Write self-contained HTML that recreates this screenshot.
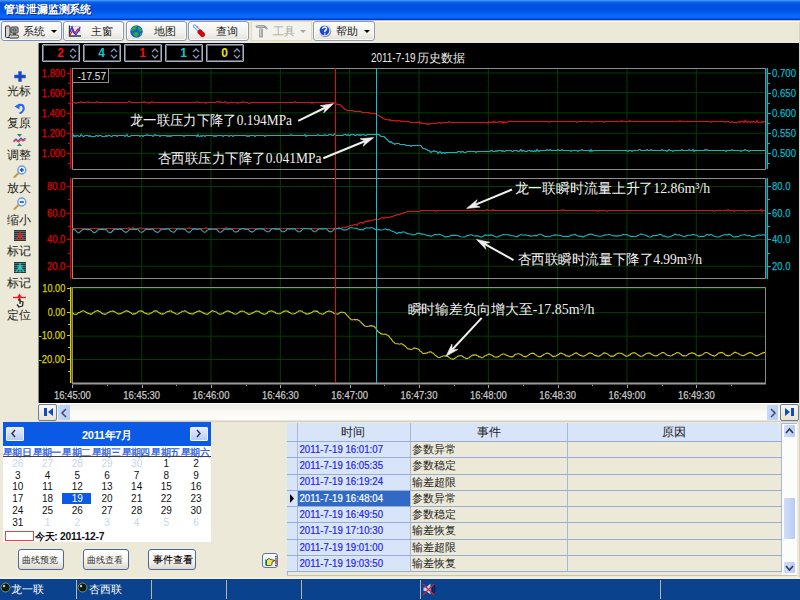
<!DOCTYPE html><html><head><meta charset="utf-8"><style>
body{margin:0;width:800px;height:600px;overflow:hidden;position:relative;background:#ECE9D8;font-family:"Liberation Sans",sans-serif;font-size:12px;color:#000}
.a{position:absolute}
.btn{position:absolute;top:21px;height:18px;border:1px solid #8a9ab8;border-radius:3px;background:linear-gradient(#fcfcfb,#f3f2ee 60%,#e4e1d6);box-shadow:inset 0 0 0 1px #fbfbf8}
.bt{position:absolute;top:3px;font-size:11px;line-height:12px;color:#222;white-space:nowrap}
.lp{position:absolute;left:0;width:38px;text-align:center;font-size:11.5px;line-height:12px;color:#222}
.spin{position:absolute;top:44px;width:36px;height:16px;border:1px solid #a8b0c0;border-radius:1px;background:#000;box-shadow:inset 0 0 0 1px #5a6270}
.spin span{position:absolute;right:15px;top:2px;font-weight:bold;font-size:12px;line-height:13px}
.cal{position:absolute;font-size:12px;line-height:12px;text-align:center;width:30px}
.tr{position:absolute;left:297px;width:485px;height:16px}
</style></head><body>
<!-- title bar -->
<div class="a" style="left:0;top:0;width:800px;height:20px;background:linear-gradient(#5aaaff 0,#2a7af8 1px,#0660e8 2.5px,#0052de 5px,#0050dc 9px,#0058f0 12px,#0a68ff 16px,#0a66fa 18px,#0040d0 19px,#0034b8 20px)"></div>
<div class="a" style="left:5px;top:4px;font-size:11px;line-height:12px;font-weight:bold;color:#0a2a80;letter-spacing:-0.1px;white-space:nowrap">管道泄漏监测系统</div>
<div class="a" style="left:4px;top:3px;font-size:11px;line-height:12px;font-weight:bold;color:#fff;letter-spacing:-0.1px;white-space:nowrap">管道泄漏监测系统</div>
<div class="a" style="left:0;top:20px;width:800px;height:1px;background:#b8c0d0"></div><div class="a" style="left:0;top:21px;width:800px;height:1px;background:#fff8dc"></div>

<!-- toolbar buttons -->
<div class="btn" style="left:1px;width:59px;border-color:#7892c8"></div>
<svg class="a" style="left:4px;top:25px" width="15" height="14" viewBox="0 0 15 14">
 <rect x="1.5" y="1" width="4.5" height="11.5" rx="1" fill="#d8d8d8" stroke="#333" stroke-width="1"/>
 <rect x="2.5" y="2" width="2" height="2" fill="#f0b0c0"/>
 <rect x="7" y="2" width="7" height="6" rx="1" fill="#bbb" stroke="#333" stroke-width="1"/>
 <rect x="8.5" y="3.5" width="4" height="3" fill="#7a2a9a"/><path d="M10.5,3.5 V6.5" stroke="#2c2" stroke-width="1.5"/>
 <path d="M9,9 H12" stroke="#222" stroke-width="1.2"/>
 <rect x="5" y="10" width="9.5" height="3" rx="1.2" fill="#ddd" stroke="#333" stroke-width="1"/>
</svg>
<div class="bt" style="left:23px;top:24.5px">系统</div>
<div class="a" style="left:51px;top:30px;width:0;height:0;border-left:3px solid transparent;border-right:3px solid transparent;border-top:3px solid #000"></div>

<div class="btn" style="left:63px;width:59px"></div>
<svg class="a" style="left:68px;top:25px" width="13" height="12" viewBox="0 0 13 12">
 <path d="M2,1.5 H13 M2,4 H13 M2,7 H13" stroke="#c8c8c8" stroke-width="1"/>
 <path d="M1.5,0.5 V11 H13" stroke="#333" stroke-width="1.3" fill="none"/>
 <path d="M2,10 L5,5 L7,8 L10,4 L12,6" stroke="#e82020" stroke-width="1.3" fill="none"/>
 <path d="M2,7 L4,2 L6,8 L8,9.5 L11,5 L12,2" stroke="#3030e0" stroke-width="1.3" fill="none"/>
</svg>
<div class="bt" style="left:91px;top:24.5px">主窗</div>

<div class="btn" style="left:126px;width:59px"></div>
<svg class="a" style="left:130px;top:25px" width="13" height="13" viewBox="0 0 13 13">
 <circle cx="6.5" cy="6.5" r="6.2" fill="#1a5ad8"/>
 <path d="M2,3 Q4,0.5 7,1 L6,4 L3,6 L1,5Z M8,1.5 Q11,2 12,5 L10,7 L8,4Z M4,7.5 L7,7 L9,9 L7,12 Q4,11.5 3,9Z M10,8.5 L12,8 Q11.5,10.5 10,11Z" fill="#28b030"/>
</svg>
<div class="bt" style="left:154px;top:24.5px">地图</div>

<div class="btn" style="left:188px;width:59px"></div>
<svg class="a" style="left:192px;top:24px" width="14" height="14" viewBox="0 0 14 14">
 <path d="M2.5,2 L8,7.5" stroke="#6aaaf0" stroke-width="3.2" stroke-linecap="round"/>
 <path d="M2.5,2 L8,7.5" stroke="#f4f8ff" stroke-width="1.2" stroke-linecap="round"/>
 <path d="M5,2.5 L6,3.5" stroke="#e44" stroke-width="1.2"/>
 <path d="M8,8 L10.5,10.5" stroke="#d00808" stroke-width="5" stroke-linecap="round"/>
</svg>
<div class="bt" style="left:216px;top:24.5px">查询</div>

<div class="a" style="left:251px;top:21px;width:59px;height:18px;border:1px solid #e4dcb8;background:#f3f2ec"></div>
<svg class="a" style="left:254px;top:24px" width="15" height="15" viewBox="0 0 15 15">
 <path d="M1.5,2 Q3,1 5,1 H10 Q12,1.5 14,5 L12.5,5.5 L10.5,4 H2.5 Z" fill="#9a9a9a"/>
 <path d="M3,2.3 H10" stroke="#d8d8d8" stroke-width=".8"/>
 <rect x="5" y="4.5" width="4" height="9" fill="#a8a8a8"/><path d="M6.5,5 V12" stroke="#e0e0e0" stroke-width=".8"/>
</svg>
<div class="bt" style="left:273px;top:24.5px;color:#aca899">工具</div>
<div class="a" style="left:300px;top:30px;width:0;height:0;border-left:3px solid transparent;border-right:3px solid transparent;border-top:3px solid #aca899"></div>

<div class="btn" style="left:313px;width:60px"></div>
<svg class="a" style="left:318px;top:24px" width="14" height="14" viewBox="0 0 14 14">
 <circle cx="7.2" cy="7.3" r="6" fill="#555" opacity=".6"/>
 <circle cx="6.5" cy="6.5" r="5.8" fill="#e8eef8"/>
 <circle cx="6.5" cy="6.5" r="4.8" fill="#1c48d0"/>
 <path d="M4.6,5 Q4.8,3 6.6,3 Q8.6,3 8.5,4.9 Q8.4,6.2 6.8,7 V8.3" stroke="#fff" stroke-width="1.4" fill="none"/>
 <circle cx="6.8" cy="10" r=".8" fill="#fff"/>
</svg>
<div class="bt" style="left:336px;top:24.5px">帮助</div>
<div class="a" style="left:364px;top:30px;width:0;height:0;border-left:3px solid transparent;border-right:3px solid transparent;border-top:3px solid #000"></div>

<!-- left panel -->
<svg class="a" style="left:14px;top:71px" width="12" height="11" viewBox="0 0 12 11"><path d="M4.5,0.5 H7.5 V4 H11.5 V7 H7.5 V10.5 H4.5 V7 H0.5 V4 H4.5Z" fill="#1848c0" stroke="#3a68d8" stroke-width=".6" stroke-linejoin="round"/></svg>
<div class="lp" style="top:85px">光标</div>
<svg class="a" style="left:14px;top:103px" width="11" height="11" viewBox="0 0 11 11"><path d="M4,3 Q6,1.5 8,2 Q10.2,3.2 9.5,6.5 Q8.5,9.5 6.5,10" stroke="#2a6ae8" stroke-width="2.2" fill="none" stroke-linecap="round"/><path d="M0.5,3.5 L5.5,0.5 L5.5,6.5Z" fill="#2a6ae8"/></svg>
<div class="lp" style="top:117px">复原</div>
<svg class="a" style="left:13px;top:134px" width="13" height="12" viewBox="0 0 13 12"><path d="M4,0 H9 L6.5,3Z M4,12 H9 L6.5,9Z" fill="#1a8a7a"/><path d="M0.5,7 L3,5 L5,7 L8,4 L10,6 L12.5,4" stroke="#3a5ae8" stroke-width="1.1" fill="none"/><path d="M0.5,8 L3,6 L5.5,8 L8,5.5 L10,7 L12.5,5.5" stroke="#e84040" stroke-width="1.1" fill="none"/></svg>
<div class="lp" style="top:149px">调整</div>
<svg class="a" style="left:13px;top:165px" width="14" height="13" viewBox="0 0 14 13"><path d="M1.5,12 L5.5,8" stroke="#d09a30" stroke-width="2" stroke-linecap="round"/><circle cx="8.8" cy="5" r="4" fill="#e8f4ff" stroke="#6a9ae8" stroke-width="1.4"/><path d="M6.8,5 H10.8 M8.8,3 V7" stroke="#1a4ac8" stroke-width="1.4"/></svg>
<div class="lp" style="top:182px">放大</div>
<svg class="a" style="left:13px;top:197px" width="14" height="13" viewBox="0 0 14 13"><path d="M1.5,12 L5.5,8" stroke="#d09a30" stroke-width="2" stroke-linecap="round"/><circle cx="8.8" cy="5" r="4" fill="#e8f4ff" stroke="#6a9ae8" stroke-width="1.4"/><path d="M6.8,5 H10.8" stroke="#1a4ac8" stroke-width="1.6"/></svg>
<div class="lp" style="top:214px">缩小</div>
<svg class="a" style="left:14px;top:230px" width="12" height="11" viewBox="0 0 12 11"><rect width="12" height="11" fill="#203838"/><path d="M0,1.5 H12 M0,3.5 H12 M0,5.5 H12 M0,7.5 H12 M0,9.5 H12" stroke="#6a8a8a" stroke-width=".7"/><path d="M6,1 V10.5 M3,4 H9 M6,4.5 L2,10 M6,4.5 L10,10" stroke="#f02020" stroke-width="1.2"/></svg>
<div class="lp" style="top:245px">标记</div>
<svg class="a" style="left:14px;top:262px" width="12" height="11" viewBox="0 0 12 11"><rect width="12" height="11" fill="#203838"/><path d="M0,1.5 H12 M0,3.5 H12 M0,5.5 H12 M0,7.5 H12 M0,9.5 H12" stroke="#6a8a8a" stroke-width=".7"/><path d="M6,1 V10.5 M3,4 H9 M6,4.5 L2,10 M6,4.5 L10,10" stroke="#20e0e0" stroke-width="1.2"/></svg>
<div class="lp" style="top:277px">标记</div>
<svg class="a" style="left:12px;top:293px" width="15" height="15" viewBox="0 0 15 15"><path d="M1,4.5 H14" stroke="#f01818" stroke-width="1.3"/><path d="M7.5,0.5 L10,4.5 L7.5,6 L5,4.5Z" fill="#f01818"/><path d="M6,7 L8,6.5 V11 M8,8 L11,9 L10.5,13 L7,14 L5,11.5" stroke="#222" stroke-width="1.3" fill="#eee" stroke-linejoin="round"/></svg>
<div class="lp" style="top:309px">定位</div>

<!-- black chart area -->
<div class="a" style="left:38px;top:43px;width:762px;height:360px;background:#000;border-left:1px solid #8a8a8a;box-sizing:border-box"></div>

<!-- spin boxes -->
<div class="spin" style="left:42px"><span style="color:#f01010">2</span></div>
<div class="spin" style="left:83px"><span style="color:#10c8d0">4</span></div>
<div class="spin" style="left:124px"><span style="color:#f01010">1</span></div>
<div class="spin" style="left:165px"><span style="color:#10c8d0">1</span></div>
<div class="spin" style="left:206px"><span style="color:#e8e020">0</span></div>
<svg class="a" style="left:0;top:0" width="800" height="600">
 <g stroke="#8090b8" stroke-width="1.3" fill="none">
  <path d="M70,52 L73,49 L76,52 M70,55 L73,58 L76,55"/>
<path d="M111,52 L114,49 L117,52 M111,55 L114,58 L117,55"/>
<path d="M152,52 L155,49 L158,52 M152,55 L155,58 L158,55"/>
<path d="M193,52 L196,49 L199,52 M193,55 L196,58 L199,55"/>
<path d="M234,52 L237,49 L240,52 M234,55 L237,58 L240,55"/>
 </g>
</svg>

<svg class="a" style="left:0;top:0" width="800" height="600" font-family="Liberation Sans">
 <!-- title -->
 <text x="371" y="61.6" font-size="12" fill="#e8e8e8" textLength="44.5" lengthAdjust="spacingAndGlyphs">2011-7-19</text><text x="416.5" y="61.6" font-size="12" fill="#e8e8e8" textLength="48.5" lengthAdjust="spacingAndGlyphs">历史数据</text>
 <!-- grids -->
 <g stroke="#003e00" stroke-width="1">
  <path d="M141.72,69 V382"/>
<path d="M211.04,69 V382"/>
<path d="M280.36,69 V382"/>
<path d="M349.68,69 V382"/>
<path d="M419.00,69 V382"/>
<path d="M488.32,69 V382"/>
<path d="M557.64,69 V382"/>
<path d="M626.96,69 V382"/>
<path d="M696.28,69 V382"/>
<path d="M73,73.0 H765"/>
<path d="M73,92.6 H765"/>
<path d="M73,112.9 H765"/>
<path d="M73,133.2 H765"/>
<path d="M73,153.3 H765"/>
<path d="M73,186.5 H765"/>
<path d="M73,213.2 H765"/>
<path d="M73,239.5 H765"/>
<path d="M73,266.2 H765"/>
<path d="M73,288.8 H765"/>
<path d="M73,312.6 H765"/>
<path d="M73,336.2 H765"/>
<path d="M73,359.5 H765"/>
 </g>
 <!-- frames -->
 <g stroke="#8c8c8c" stroke-width="1" fill="none">
  <path d="M72.5,68.5 H765.5 V169.5 H72.5 Z"/>
  <path d="M72.5,178.5 H765.5 V278.5 H72.5 Z"/>
  <path d="M72.5,287.5 H765.5 V382.5 M72.5,287.5 V383"/>
 </g>
 <path d="M72,383.5 H766" stroke="#9a9a9a" stroke-width="2"/>
 <!-- axes -->
 <g stroke-width="1.5">
  <path d="M70.75,68 V169 M70.75,178 V279" stroke="#e00000"/>
  <path d="M767.25,68 V169 M767.25,178 V279" stroke="#00b8c8"/>
  <path d="M70.75,287 V383" stroke="#d8d000"/>
 </g>
 <path d="M67,73.5 H70" stroke="#e00000"/>
<path d="M67,93.5 H70" stroke="#e00000"/>
<path d="M67,113.5 H70" stroke="#e00000"/>
<path d="M67,133.5 H70" stroke="#e00000"/>
<path d="M67,153.5 H70" stroke="#e00000"/>
<path d="M68,83.5 H70" stroke="#e00000"/>
<path d="M68,103.5 H70" stroke="#e00000"/>
<path d="M68,123.5 H70" stroke="#e00000"/>
<path d="M68,143.5 H70" stroke="#e00000"/>
<path d="M68,163.5 H70" stroke="#e00000"/>
<path d="M768,73.5 H771" stroke="#00b8c8"/>
<path d="M768,93.5 H771" stroke="#00b8c8"/>
<path d="M768,113.5 H771" stroke="#00b8c8"/>
<path d="M768,133.5 H771" stroke="#00b8c8"/>
<path d="M768,153.5 H771" stroke="#00b8c8"/>
<path d="M768,83.5 H770" stroke="#00b8c8"/>
<path d="M768,103.5 H770" stroke="#00b8c8"/>
<path d="M768,123.5 H770" stroke="#00b8c8"/>
<path d="M768,143.5 H770" stroke="#00b8c8"/>
<path d="M768,163.5 H770" stroke="#00b8c8"/>
<path d="M67,186.5 H70" stroke="#e00000"/>
<path d="M67,213.5 H70" stroke="#e00000"/>
<path d="M67,239.5 H70" stroke="#e00000"/>
<path d="M67,266.5 H70" stroke="#e00000"/>
<path d="M68,199.5 H70" stroke="#e00000"/>
<path d="M68,226.5 H70" stroke="#e00000"/>
<path d="M68,253.5 H70" stroke="#e00000"/>
<path d="M768,186.5 H771" stroke="#00b8c8"/>
<path d="M768,213.5 H771" stroke="#00b8c8"/>
<path d="M768,239.5 H771" stroke="#00b8c8"/>
<path d="M768,266.5 H771" stroke="#00b8c8"/>
<path d="M768,199.5 H770" stroke="#00b8c8"/>
<path d="M768,226.5 H770" stroke="#00b8c8"/>
<path d="M768,253.5 H770" stroke="#00b8c8"/>
<path d="M67,288.5 H70" stroke="#d8d000"/>
<path d="M67,312.5 H70" stroke="#d8d000"/>
<path d="M67,335.5 H70" stroke="#d8d000"/>
<path d="M67,359.5 H70" stroke="#d8d000"/>
<path d="M68,300.5 H70" stroke="#d8d000"/>
<path d="M68,324.5 H70" stroke="#d8d000"/>
<path d="M68,347.5 H70" stroke="#d8d000"/>
<path d="M68,371.5 H70" stroke="#d8d000"/>
<path d="M72.5,385 V388" stroke="#a8a8a8"/>
<path d="M107.5,385 V386" stroke="#a8a8a8"/>
<path d="M142.5,385 V388" stroke="#a8a8a8"/>
<path d="M176.5,385 V386" stroke="#a8a8a8"/>
<path d="M211.5,385 V388" stroke="#a8a8a8"/>
<path d="M246.5,385 V386" stroke="#a8a8a8"/>
<path d="M280.5,385 V388" stroke="#a8a8a8"/>
<path d="M315.5,385 V386" stroke="#a8a8a8"/>
<path d="M350.5,385 V388" stroke="#a8a8a8"/>
<path d="M384.5,385 V386" stroke="#a8a8a8"/>
<path d="M419.5,385 V388" stroke="#a8a8a8"/>
<path d="M454.5,385 V386" stroke="#a8a8a8"/>
<path d="M488.5,385 V388" stroke="#a8a8a8"/>
<path d="M523.5,385 V386" stroke="#a8a8a8"/>
<path d="M558.5,385 V388" stroke="#a8a8a8"/>
<path d="M592.5,385 V386" stroke="#a8a8a8"/>
<path d="M627.5,385 V388" stroke="#a8a8a8"/>
<path d="M662.5,385 V386" stroke="#a8a8a8"/>
<path d="M696.5,385 V388" stroke="#a8a8a8"/>
<path d="M731.5,385 V386" stroke="#a8a8a8"/>
 <!-- curves -->
 <path d="M72.0,102.5 L73.0,102.5 L74.0,102.5 L75.0,102.5 L76.0,103.5 L77.0,102.5 L78.0,102.5 L79.0,102.5 L80.0,102.5 L81.0,101.5 L82.0,102.5 L83.0,102.5 L84.0,102.5 L85.0,102.5 L86.0,102.5 L87.0,102.5 L88.0,101.5 L89.0,102.5 L90.0,102.5 L91.0,102.5 L92.0,102.5 L93.0,102.5 L94.0,102.5 L95.0,102.5 L96.0,102.5 L97.0,101.5 L98.0,102.5 L99.0,102.5 L100.0,102.5 L101.0,102.5 L102.0,102.5 L103.0,102.5 L104.0,102.5 L105.0,102.5 L106.0,102.5 L107.0,102.5 L108.0,102.5 L109.0,102.5 L110.0,102.5 L111.0,102.5 L112.0,102.5 L113.0,102.5 L114.0,102.5 L115.0,102.5 L116.0,102.5 L117.0,102.5 L118.0,102.5 L119.0,102.5 L120.0,102.5 L121.0,102.5 L122.0,102.5 L123.0,102.5 L124.0,102.5 L125.0,102.5 L126.0,102.5 L127.0,102.5 L128.0,102.5 L129.0,101.5 L130.0,101.5 L131.0,102.5 L132.0,102.5 L133.0,102.5 L134.0,102.5 L135.0,102.5 L136.0,102.5 L137.0,102.5 L138.0,102.5 L139.0,102.5 L140.0,102.5 L141.0,102.5 L142.0,102.5 L143.0,102.5 L144.0,101.5 L145.0,102.5 L146.0,102.5 L147.0,102.5 L148.0,102.5 L149.0,103.5 L150.0,102.5 L151.0,102.5 L152.0,101.5 L153.0,102.5 L154.0,102.5 L155.0,102.5 L156.0,102.5 L157.0,102.5 L158.0,102.5 L159.0,102.5 L160.0,102.5 L161.0,102.5 L162.0,102.5 L163.0,102.5 L164.0,102.5 L165.0,102.5 L166.0,102.5 L167.0,102.5 L168.0,102.5 L169.0,102.5 L170.0,102.5 L171.0,102.5 L172.0,102.5 L173.0,102.5 L174.0,102.5 L175.0,102.5 L176.0,102.5 L177.0,102.5 L178.0,102.5 L179.0,102.5 L180.0,102.5 L181.0,102.5 L182.0,102.5 L183.0,102.5 L184.0,102.5 L185.0,102.5 L186.0,102.5 L187.0,102.5 L188.0,102.5 L189.0,102.5 L190.0,102.5 L191.0,102.5 L192.0,102.5 L193.0,102.5 L194.0,102.5 L195.0,102.5 L196.0,102.5 L197.0,101.5 L198.0,102.5 L199.0,102.5 L200.0,102.5 L201.0,102.5 L202.0,102.5 L203.0,102.5 L204.0,102.5 L205.0,102.5 L206.0,103.5 L207.0,102.5 L208.0,102.5 L209.0,102.5 L210.0,102.5 L211.0,102.5 L212.0,102.5 L213.0,102.5 L214.0,102.5 L215.0,102.5 L216.0,102.5 L217.0,101.5 L218.0,101.5 L219.0,102.5 L220.0,101.5 L221.0,102.5 L222.0,102.5 L223.0,102.5 L224.0,102.5 L225.0,101.5 L226.0,102.5 L227.0,102.5 L228.0,103.5 L229.0,102.5 L230.0,102.5 L231.0,102.5 L232.0,102.5 L233.0,102.5 L234.0,102.5 L235.0,102.5 L236.0,102.5 L237.0,102.5 L238.0,103.5 L239.0,102.5 L240.0,102.5 L241.0,102.5 L242.0,102.5 L243.0,101.5 L244.0,102.5 L245.0,102.5 L246.0,102.5 L247.0,102.5 L248.0,102.5 L249.0,103.5 L250.0,103.5 L251.0,102.5 L252.0,102.5 L253.0,102.5 L254.0,102.5 L255.0,102.5 L256.0,102.5 L257.0,102.5 L258.0,102.5 L259.0,102.5 L260.0,102.5 L261.0,102.5 L262.0,102.5 L263.0,102.5 L264.0,102.5 L265.0,102.5 L266.0,102.5 L267.0,102.5 L268.0,102.5 L269.0,102.5 L270.0,102.5 L271.0,102.5 L272.0,102.5 L273.0,102.5 L274.0,102.5 L275.0,102.5 L276.0,102.5 L277.0,102.5 L278.0,102.5 L279.0,102.5 L280.0,102.5 L281.0,102.5 L282.0,102.5 L283.0,102.5 L284.0,102.5 L285.0,102.5 L286.0,102.5 L287.0,102.5 L288.0,102.5 L289.0,102.5 L290.0,102.5 L291.0,102.5 L292.0,102.5 L293.0,102.5 L294.0,102.5 L295.0,101.5 L296.0,102.5 L297.0,102.5 L298.0,102.5 L299.0,102.5 L300.0,102.5 L301.0,102.5 L302.0,102.5 L303.0,102.5 L304.0,102.5 L305.0,102.5 L306.0,102.5 L307.0,102.5 L308.0,102.5 L309.0,102.5 L310.0,102.5 L311.0,102.5 L312.0,103.5 L313.0,102.5 L314.0,102.5 L315.0,102.5 L316.0,102.5 L317.0,102.5 L318.0,102.5 L319.0,102.5 L320.0,102.5 L321.0,102.5 L322.0,102.5 L323.0,102.5 L324.0,102.5 L325.0,102.5 L326.0,102.5 L327.0,102.5 L328.0,102.5 L329.0,102.5 L330.0,102.5 L331.0,102.5 L332.0,102.5 L333.0,102.5 L334.0,102.5 L335.0,102.5 L336.0,103.5 L337.0,104.5 L338.0,104.5 L339.0,104.5 L340.0,104.5 L341.0,105.5 L342.0,106.5 L343.0,107.5 L344.0,108.5 L345.0,109.5 L346.0,109.5 L347.0,110.5 L348.0,110.5 L349.0,110.5 L350.0,110.5 L351.0,110.5 L352.0,110.5 L353.0,110.5 L354.0,111.5 L355.0,111.5 L356.0,111.5 L357.0,111.5 L358.0,111.5 L359.0,111.5 L360.0,111.5 L361.0,111.5 L362.0,112.5 L363.0,112.5 L364.0,112.5 L365.0,112.5 L366.0,112.5 L367.0,112.5 L368.0,112.5 L369.0,112.5 L370.0,113.5 L371.0,113.5 L372.0,113.5 L373.0,113.5 L374.0,113.5 L375.0,113.5 L376.0,113.5 L377.0,114.5 L378.0,115.5 L379.0,115.5 L380.0,116.5 L381.0,116.5 L382.0,117.5 L383.0,118.5 L384.0,118.5 L385.0,119.5 L386.0,119.5 L387.0,119.5 L388.0,119.5 L389.0,120.5 L390.0,119.5 L391.0,120.5 L392.0,120.5 L393.0,120.5 L394.0,120.5 L395.0,120.5 L396.0,120.5 L397.0,121.5 L398.0,120.5 L399.0,120.5 L400.0,120.5 L401.0,121.5 L402.0,121.5 L403.0,121.5 L404.0,121.5 L405.0,121.5 L406.0,121.5 L407.0,121.5 L408.0,121.5 L409.0,121.5 L410.0,122.5 L411.0,122.5 L412.0,122.5 L413.0,122.5 L414.0,122.5 L415.0,122.5 L416.0,122.5 L417.0,122.5 L418.0,122.5 L419.0,121.5 L420.0,123.5 L421.0,122.5 L422.0,123.5 L423.0,123.5 L424.0,123.5 L425.0,123.5 L426.0,123.5 L427.0,124.5 L428.0,123.5 L429.0,124.5 L430.0,123.5 L431.0,123.5 L432.0,123.5 L433.0,123.5 L434.0,123.5 L435.0,123.5 L436.0,123.5 L437.0,123.5 L438.0,122.5 L439.0,122.5 L440.0,122.5 L441.0,123.5 L442.0,122.5 L443.0,122.5 L444.0,122.5 L445.0,122.5 L446.0,122.5 L447.0,122.5 L448.0,122.5 L449.0,121.5 L450.0,122.5 L451.0,122.5 L452.0,122.5 L453.0,122.5 L454.0,122.5 L455.0,122.5 L456.0,122.5 L457.0,122.5 L458.0,122.5 L459.0,122.5 L460.0,122.5 L461.0,122.5 L462.0,122.5 L463.0,122.5 L464.0,122.5 L465.0,122.5 L466.0,122.5 L467.0,122.5 L468.0,122.5 L469.0,122.5 L470.0,122.5 L471.0,122.5 L472.0,122.5 L473.0,122.5 L474.0,122.5 L475.0,122.5 L476.0,122.5 L477.0,122.5 L478.0,122.5 L479.0,122.5 L480.0,122.5 L481.0,122.5 L482.0,122.5 L483.0,122.5 L484.0,122.5 L485.0,122.5 L486.0,122.5 L487.0,122.5 L488.0,123.5 L489.0,121.5 L490.0,122.5 L491.0,122.5 L492.0,122.5 L493.0,121.5 L494.0,122.5 L495.0,121.5 L496.0,122.5 L497.0,122.5 L498.0,122.5 L499.0,121.5 L500.0,121.5 L501.0,122.5 L502.0,121.5 L503.0,123.5 L504.0,121.5 L505.0,122.5 L506.0,122.5 L507.0,122.5 L508.0,121.5 L509.0,121.5 L510.0,121.5 L511.0,121.5 L512.0,121.5 L513.0,121.5 L514.0,121.5 L515.0,121.5 L516.0,121.5 L517.0,121.5 L518.0,121.5 L519.0,121.5 L520.0,121.5 L521.0,121.5 L522.0,121.5 L523.0,121.5 L524.0,121.5 L525.0,121.5 L526.0,121.5 L527.0,121.5 L528.0,121.5 L529.0,121.5 L530.0,121.5 L531.0,121.5 L532.0,121.5 L533.0,121.5 L534.0,121.5 L535.0,121.5 L536.0,121.5 L537.0,121.5 L538.0,121.5 L539.0,121.5 L540.0,121.5 L541.0,121.5 L542.0,121.5 L543.0,121.5 L544.0,121.5 L545.0,121.5 L546.0,121.5 L547.0,121.5 L548.0,121.5 L549.0,122.5 L550.0,121.5 L551.0,121.5 L552.0,121.5 L553.0,121.5 L554.0,121.5 L555.0,121.5 L556.0,121.5 L557.0,121.5 L558.0,121.5 L559.0,121.5 L560.0,121.5 L561.0,121.5 L562.0,121.5 L563.0,121.5 L564.0,121.5 L565.0,121.5 L566.0,121.5 L567.0,121.5 L568.0,121.5 L569.0,121.5 L570.0,121.5 L571.0,121.5 L572.0,121.5 L573.0,121.5 L574.0,121.5 L575.0,121.5 L576.0,121.5 L577.0,122.5 L578.0,121.5 L579.0,121.5 L580.0,121.5 L581.0,121.5 L582.0,121.5 L583.0,121.5 L584.0,121.5 L585.0,121.5 L586.0,121.5 L587.0,121.5 L588.0,121.5 L589.0,121.5 L590.0,121.5 L591.0,121.5 L592.0,122.5 L593.0,121.5 L594.0,121.5 L595.0,121.5 L596.0,121.5 L597.0,121.5 L598.0,121.5 L599.0,121.5 L600.0,121.5 L601.0,121.5 L602.0,121.5 L603.0,121.5 L604.0,122.5 L605.0,121.5 L606.0,121.5 L607.0,121.5 L608.0,121.5 L609.0,121.5 L610.0,121.5 L611.0,121.5 L612.0,121.5 L613.0,121.5 L614.0,121.5 L615.0,121.5 L616.0,121.5 L617.0,121.5 L618.0,121.5 L619.0,121.5 L620.0,121.5 L621.0,121.5 L622.0,120.5 L623.0,121.5 L624.0,121.5 L625.0,121.5 L626.0,121.5 L627.0,121.5 L628.0,121.5 L629.0,121.5 L630.0,120.5 L631.0,121.5 L632.0,121.5 L633.0,121.5 L634.0,121.5 L635.0,121.5 L636.0,121.5 L637.0,121.5 L638.0,121.5 L639.0,121.5 L640.0,121.5 L641.0,121.5 L642.0,121.5 L643.0,121.5 L644.0,121.5 L645.0,121.5 L646.0,121.5 L647.0,121.5 L648.0,121.5 L649.0,121.5 L650.0,121.5 L651.0,121.5 L652.0,121.5 L653.0,121.5 L654.0,121.5 L655.0,121.5 L656.0,121.5 L657.0,121.5 L658.0,121.5 L659.0,121.5 L660.0,121.5 L661.0,121.5 L662.0,121.5 L663.0,121.5 L664.0,121.5 L665.0,121.5 L666.0,121.5 L667.0,121.5 L668.0,121.5 L669.0,121.5 L670.0,121.5 L671.0,121.5 L672.0,121.5 L673.0,121.5 L674.0,121.5 L675.0,121.5 L676.0,121.5 L677.0,121.5 L678.0,121.5 L679.0,121.5 L680.0,120.5 L681.0,121.5 L682.0,121.5 L683.0,121.5 L684.0,121.5 L685.0,121.5 L686.0,121.5 L687.0,121.5 L688.0,121.5 L689.0,121.5 L690.0,121.5 L691.0,121.5 L692.0,121.5 L693.0,121.5 L694.0,121.5 L695.0,121.5 L696.0,121.5 L697.0,121.5 L698.0,121.5 L699.0,121.5 L700.0,121.5 L701.0,121.5 L702.0,121.5 L703.0,121.5 L704.0,121.5 L705.0,121.5 L706.0,121.5 L707.0,121.5 L708.0,121.5 L709.0,121.5 L710.0,121.5 L711.0,122.5 L712.0,121.5 L713.0,121.5 L714.0,121.5 L715.0,121.5 L716.0,121.5 L717.0,121.5 L718.0,121.5 L719.0,121.5 L720.0,121.5 L721.0,121.5 L722.0,121.5 L723.0,121.5 L724.0,121.5 L725.0,122.5 L726.0,121.5 L727.0,121.5 L728.0,121.5 L729.0,121.5 L730.0,122.5 L731.0,122.5 L732.0,121.5 L733.0,122.5 L734.0,122.5 L735.0,122.5 L736.0,122.5 L737.0,122.5 L738.0,122.5 L739.0,121.5 L740.0,122.5 L741.0,121.5 L742.0,121.5 L743.0,121.5 L744.0,122.5 L745.0,120.5 L746.0,121.5 L747.0,122.5 L748.0,121.5 L749.0,121.5 L750.0,122.5 L751.0,121.5 L752.0,122.5 L753.0,121.5 L754.0,121.5 L755.0,122.5 L756.0,122.5 L757.0,120.5 L758.0,122.5 L759.0,122.5 L760.0,122.5 L761.0,122.5 L762.0,121.5 L763.0,122.5 L764.0,121.5 L765.0,121.5" stroke="#d81414" stroke-width="1.1" fill="none"/>
 <path d="M72.0,136.5 L73.0,134.5 L74.0,136.5 L75.0,135.5 L76.0,136.5 L77.0,135.5 L78.0,135.5 L79.0,136.5 L80.0,136.5 L81.0,134.5 L82.0,135.5 L83.0,136.5 L84.0,136.5 L85.0,135.5 L86.0,135.5 L87.0,135.5 L88.0,135.5 L89.0,136.5 L90.0,135.5 L91.0,136.5 L92.0,136.5 L93.0,136.5 L94.0,136.5 L95.0,136.5 L96.0,135.5 L97.0,135.5 L98.0,136.5 L99.0,135.5 L100.0,135.5 L101.0,135.5 L102.0,136.5 L103.0,136.5 L104.0,136.5 L105.0,136.5 L106.0,135.5 L107.0,136.5 L108.0,135.5 L109.0,135.5 L110.0,135.5 L111.0,136.5 L112.0,136.5 L113.0,135.5 L114.0,135.5 L115.0,135.5 L116.0,135.5 L117.0,136.5 L118.0,135.5 L119.0,135.5 L120.0,135.5 L121.0,135.5 L122.0,135.5 L123.0,135.5 L124.0,135.5 L125.0,136.5 L126.0,135.5 L127.0,134.5 L128.0,136.5 L129.0,136.5 L130.0,136.5 L131.0,135.5 L132.0,135.5 L133.0,135.5 L134.0,135.5 L135.0,135.5 L136.0,135.5 L137.0,135.5 L138.0,135.5 L139.0,135.5 L140.0,136.5 L141.0,135.5 L142.0,135.5 L143.0,136.5 L144.0,135.5 L145.0,135.5 L146.0,135.5 L147.0,134.5 L148.0,135.5 L149.0,135.5 L150.0,135.5 L151.0,135.5 L152.0,135.5 L153.0,136.5 L154.0,135.5 L155.0,134.5 L156.0,135.5 L157.0,135.5 L158.0,135.5 L159.0,135.5 L160.0,136.5 L161.0,135.5 L162.0,135.5 L163.0,135.5 L164.0,135.5 L165.0,135.5 L166.0,135.5 L167.0,136.5 L168.0,135.5 L169.0,136.5 L170.0,135.5 L171.0,136.5 L172.0,135.5 L173.0,135.5 L174.0,135.5 L175.0,135.5 L176.0,135.5 L177.0,135.5 L178.0,135.5 L179.0,135.5 L180.0,135.5 L181.0,135.5 L182.0,135.5 L183.0,135.5 L184.0,136.5 L185.0,135.5 L186.0,135.5 L187.0,135.5 L188.0,135.5 L189.0,135.5 L190.0,135.5 L191.0,135.5 L192.0,135.5 L193.0,135.5 L194.0,135.5 L195.0,135.5 L196.0,135.5 L197.0,136.5 L198.0,134.5 L199.0,136.5 L200.0,136.5 L201.0,135.5 L202.0,136.5 L203.0,135.5 L204.0,135.5 L205.0,136.5 L206.0,135.5 L207.0,135.5 L208.0,135.5 L209.0,135.5 L210.0,135.5 L211.0,135.5 L212.0,135.5 L213.0,135.5 L214.0,136.5 L215.0,135.5 L216.0,136.5 L217.0,135.5 L218.0,135.5 L219.0,135.5 L220.0,135.5 L221.0,135.5 L222.0,135.5 L223.0,136.5 L224.0,135.5 L225.0,135.5 L226.0,135.5 L227.0,135.5 L228.0,135.5 L229.0,136.5 L230.0,135.5 L231.0,135.5 L232.0,135.5 L233.0,136.5 L234.0,135.5 L235.0,135.5 L236.0,135.5 L237.0,135.5 L238.0,135.5 L239.0,135.5 L240.0,135.5 L241.0,135.5 L242.0,135.5 L243.0,135.5 L244.0,135.5 L245.0,135.5 L246.0,135.5 L247.0,136.5 L248.0,135.5 L249.0,136.5 L250.0,135.5 L251.0,135.5 L252.0,135.5 L253.0,135.5 L254.0,135.5 L255.0,136.5 L256.0,135.5 L257.0,135.5 L258.0,135.5 L259.0,135.5 L260.0,135.5 L261.0,135.5 L262.0,135.5 L263.0,135.5 L264.0,135.5 L265.0,136.5 L266.0,135.5 L267.0,135.5 L268.0,135.5 L269.0,135.5 L270.0,135.5 L271.0,135.5 L272.0,135.5 L273.0,135.5 L274.0,135.5 L275.0,135.5 L276.0,135.5 L277.0,135.5 L278.0,135.5 L279.0,135.5 L280.0,135.5 L281.0,135.5 L282.0,135.5 L283.0,135.5 L284.0,135.5 L285.0,135.5 L286.0,135.5 L287.0,135.5 L288.0,135.5 L289.0,135.5 L290.0,135.5 L291.0,134.5 L292.0,135.5 L293.0,135.5 L294.0,135.5 L295.0,135.5 L296.0,135.5 L297.0,135.5 L298.0,135.5 L299.0,135.5 L300.0,135.5 L301.0,135.5 L302.0,135.5 L303.0,135.5 L304.0,135.5 L305.0,134.5 L306.0,136.5 L307.0,135.5 L308.0,135.5 L309.0,135.5 L310.0,135.5 L311.0,135.5 L312.0,135.5 L313.0,135.5 L314.0,135.5 L315.0,135.5 L316.0,135.5 L317.0,135.5 L318.0,134.5 L319.0,135.5 L320.0,135.5 L321.0,135.5 L322.0,135.5 L323.0,135.5 L324.0,135.5 L325.0,134.5 L326.0,135.5 L327.0,135.5 L328.0,135.5 L329.0,134.5 L330.0,134.5 L331.0,134.5 L332.0,135.5 L333.0,135.5 L334.0,134.5 L335.0,133.5 L336.0,135.5 L337.0,135.5 L338.0,135.5 L339.0,135.5 L340.0,135.5 L341.0,135.5 L342.0,135.5 L343.0,135.5 L344.0,134.5 L345.0,134.5 L346.0,134.5 L347.0,135.5 L348.0,134.5 L349.0,135.5 L350.0,135.5 L351.0,134.5 L352.0,134.5 L353.0,134.5 L354.0,134.5 L355.0,135.5 L356.0,135.5 L357.0,134.5 L358.0,134.5 L359.0,135.5 L360.0,134.5 L361.0,135.5 L362.0,134.5 L363.0,134.5 L364.0,134.5 L365.0,135.5 L366.0,135.5 L367.0,134.5 L368.0,134.5 L369.0,134.5 L370.0,134.5 L371.0,134.5 L372.0,134.5 L373.0,134.5 L374.0,134.5 L375.0,134.5 L376.0,134.5 L377.0,134.5 L378.0,134.5 L379.0,134.5 L380.0,135.5 L381.0,136.5 L382.0,136.5 L383.0,136.5 L384.0,136.5 L385.0,137.5 L386.0,138.5 L387.0,139.5 L388.0,140.5 L389.0,141.5 L390.0,142.5 L391.0,141.5 L392.0,142.5 L393.0,143.5 L394.0,143.5 L395.0,144.5 L396.0,143.5 L397.0,143.5 L398.0,143.5 L399.0,143.5 L400.0,144.5 L401.0,144.5 L402.0,144.5 L403.0,144.5 L404.0,144.5 L405.0,144.5 L406.0,145.5 L407.0,145.5 L408.0,145.5 L409.0,145.5 L410.0,145.5 L411.0,146.5 L412.0,145.5 L413.0,145.5 L414.0,145.5 L415.0,145.5 L416.0,145.5 L417.0,145.5 L418.0,145.5 L419.0,145.5 L420.0,145.5 L421.0,145.5 L422.0,147.5 L423.0,148.5 L424.0,148.5 L425.0,148.5 L426.0,149.5 L427.0,149.5 L428.0,150.5 L429.0,150.5 L430.0,151.5 L431.0,152.5 L432.0,151.5 L433.0,151.5 L434.0,150.5 L435.0,151.5 L436.0,151.5 L437.0,151.5 L438.0,153.5 L439.0,152.5 L440.0,151.5 L441.0,152.5 L442.0,153.5 L443.0,152.5 L444.0,152.5 L445.0,153.5 L446.0,152.5 L447.0,152.5 L448.0,152.5 L449.0,152.5 L450.0,152.5 L451.0,152.5 L452.0,152.5 L453.0,152.5 L454.0,152.5 L455.0,152.5 L456.0,152.5 L457.0,152.5 L458.0,151.5 L459.0,151.5 L460.0,151.5 L461.0,152.5 L462.0,151.5 L463.0,151.5 L464.0,152.5 L465.0,152.5 L466.0,152.5 L467.0,151.5 L468.0,151.5 L469.0,151.5 L470.0,151.5 L471.0,151.5 L472.0,151.5 L473.0,151.5 L474.0,151.5 L475.0,151.5 L476.0,152.5 L477.0,151.5 L478.0,151.5 L479.0,151.5 L480.0,151.5 L481.0,151.5 L482.0,151.5 L483.0,151.5 L484.0,151.5 L485.0,151.5 L486.0,151.5 L487.0,151.5 L488.0,151.5 L489.0,151.5 L490.0,151.5 L491.0,150.5 L492.0,150.5 L493.0,151.5 L494.0,151.5 L495.0,151.5 L496.0,150.5 L497.0,151.5 L498.0,150.5 L499.0,150.5 L500.0,150.5 L501.0,150.5 L502.0,151.5 L503.0,150.5 L504.0,151.5 L505.0,151.5 L506.0,150.5 L507.0,150.5 L508.0,150.5 L509.0,150.5 L510.0,150.5 L511.0,150.5 L512.0,151.5 L513.0,151.5 L514.0,150.5 L515.0,150.5 L516.0,150.5 L517.0,150.5 L518.0,151.5 L519.0,151.5 L520.0,150.5 L521.0,149.5 L522.0,151.5 L523.0,150.5 L524.0,150.5 L525.0,151.5 L526.0,151.5 L527.0,151.5 L528.0,150.5 L529.0,150.5 L530.0,150.5 L531.0,151.5 L532.0,150.5 L533.0,151.5 L534.0,151.5 L535.0,150.5 L536.0,151.5 L537.0,149.5 L538.0,150.5 L539.0,151.5 L540.0,150.5 L541.0,150.5 L542.0,150.5 L543.0,150.5 L544.0,150.5 L545.0,150.5 L546.0,150.5 L547.0,149.5 L548.0,150.5 L549.0,150.5 L550.0,149.5 L551.0,150.5 L552.0,150.5 L553.0,150.5 L554.0,150.5 L555.0,150.5 L556.0,150.5 L557.0,150.5 L558.0,149.5 L559.0,150.5 L560.0,150.5 L561.0,150.5 L562.0,149.5 L563.0,150.5 L564.0,150.5 L565.0,150.5 L566.0,150.5 L567.0,150.5 L568.0,150.5 L569.0,150.5 L570.0,150.5 L571.0,151.5 L572.0,150.5 L573.0,150.5 L574.0,150.5 L575.0,150.5 L576.0,150.5 L577.0,150.5 L578.0,151.5 L579.0,150.5 L580.0,150.5 L581.0,150.5 L582.0,149.5 L583.0,150.5 L584.0,150.5 L585.0,150.5 L586.0,150.5 L587.0,150.5 L588.0,150.5 L589.0,150.5 L590.0,151.5 L591.0,149.5 L592.0,151.5 L593.0,150.5 L594.0,150.5 L595.0,150.5 L596.0,150.5 L597.0,150.5 L598.0,150.5 L599.0,150.5 L600.0,150.5 L601.0,150.5 L602.0,150.5 L603.0,150.5 L604.0,150.5 L605.0,150.5 L606.0,150.5 L607.0,150.5 L608.0,150.5 L609.0,150.5 L610.0,150.5 L611.0,150.5 L612.0,150.5 L613.0,150.5 L614.0,150.5 L615.0,150.5 L616.0,150.5 L617.0,150.5 L618.0,150.5 L619.0,150.5 L620.0,150.5 L621.0,150.5 L622.0,150.5 L623.0,150.5 L624.0,150.5 L625.0,150.5 L626.0,150.5 L627.0,150.5 L628.0,151.5 L629.0,150.5 L630.0,150.5 L631.0,150.5 L632.0,151.5 L633.0,150.5 L634.0,150.5 L635.0,150.5 L636.0,150.5 L637.0,150.5 L638.0,150.5 L639.0,149.5 L640.0,149.5 L641.0,150.5 L642.0,150.5 L643.0,150.5 L644.0,150.5 L645.0,150.5 L646.0,150.5 L647.0,149.5 L648.0,150.5 L649.0,150.5 L650.0,150.5 L651.0,149.5 L652.0,150.5 L653.0,150.5 L654.0,150.5 L655.0,150.5 L656.0,150.5 L657.0,150.5 L658.0,150.5 L659.0,150.5 L660.0,150.5 L661.0,150.5 L662.0,149.5 L663.0,150.5 L664.0,150.5 L665.0,150.5 L666.0,150.5 L667.0,151.5 L668.0,150.5 L669.0,149.5 L670.0,150.5 L671.0,150.5 L672.0,150.5 L673.0,151.5 L674.0,150.5 L675.0,150.5 L676.0,150.5 L677.0,150.5 L678.0,150.5 L679.0,150.5 L680.0,150.5 L681.0,150.5 L682.0,149.5 L683.0,150.5 L684.0,150.5 L685.0,150.5 L686.0,150.5 L687.0,150.5 L688.0,150.5 L689.0,149.5 L690.0,150.5 L691.0,150.5 L692.0,150.5 L693.0,149.5 L694.0,151.5 L695.0,150.5 L696.0,150.5 L697.0,150.5 L698.0,150.5 L699.0,150.5 L700.0,150.5 L701.0,150.5 L702.0,150.5 L703.0,150.5 L704.0,150.5 L705.0,149.5 L706.0,150.5 L707.0,149.5 L708.0,150.5 L709.0,150.5 L710.0,150.5 L711.0,150.5 L712.0,150.5 L713.0,150.5 L714.0,150.5 L715.0,150.5 L716.0,150.5 L717.0,150.5 L718.0,150.5 L719.0,150.5 L720.0,150.5 L721.0,150.5 L722.0,150.5 L723.0,150.5 L724.0,150.5 L725.0,150.5 L726.0,151.5 L727.0,150.5 L728.0,150.5 L729.0,150.5 L730.0,150.5 L731.0,150.5 L732.0,149.5 L733.0,150.5 L734.0,150.5 L735.0,150.5 L736.0,150.5 L737.0,150.5 L738.0,150.5 L739.0,150.5 L740.0,150.5 L741.0,151.5 L742.0,150.5 L743.0,150.5 L744.0,150.5 L745.0,149.5 L746.0,150.5 L747.0,150.5 L748.0,150.5 L749.0,151.5 L750.0,150.5 L751.0,150.5 L752.0,150.5 L753.0,150.5 L754.0,150.5 L755.0,150.5 L756.0,150.5 L757.0,150.5 L758.0,150.5 L759.0,150.5 L760.0,150.5 L761.0,150.5 L762.0,150.5 L763.0,150.5 L764.0,150.5 L765.0,150.5" stroke="#14b4c4" stroke-width="1.1" fill="none"/>
 <path d="M72.0,228.5 L73.0,228.5 L74.0,228.5 L75.0,228.5 L76.0,228.5 L77.0,228.5 L78.0,228.5 L79.0,228.5 L80.0,228.5 L81.0,228.5 L82.0,228.5 L83.0,228.5 L84.0,229.5 L85.0,228.5 L86.0,228.5 L87.0,228.5 L88.0,228.5 L89.0,228.5 L90.0,228.5 L91.0,228.5 L92.0,228.5 L93.0,228.5 L94.0,228.5 L95.0,228.5 L96.0,228.5 L97.0,228.5 L98.0,228.5 L99.0,228.5 L100.0,228.5 L101.0,228.5 L102.0,228.5 L103.0,228.5 L104.0,228.5 L105.0,228.5 L106.0,228.5 L107.0,228.5 L108.0,228.5 L109.0,228.5 L110.0,228.5 L111.0,228.5 L112.0,228.5 L113.0,228.5 L114.0,228.5 L115.0,228.5 L116.0,228.5 L117.0,228.5 L118.0,228.5 L119.0,228.5 L120.0,228.5 L121.0,228.5 L122.0,228.5 L123.0,228.5 L124.0,228.5 L125.0,228.5 L126.0,228.5 L127.0,228.5 L128.0,228.5 L129.0,227.5 L130.0,228.5 L131.0,228.5 L132.0,228.5 L133.0,227.5 L134.0,229.5 L135.0,228.5 L136.0,228.5 L137.0,228.5 L138.0,228.5 L139.0,228.5 L140.0,227.5 L141.0,228.5 L142.0,228.5 L143.0,228.5 L144.0,228.5 L145.0,228.5 L146.0,228.5 L147.0,228.5 L148.0,228.5 L149.0,228.5 L150.0,228.5 L151.0,228.5 L152.0,228.5 L153.0,228.5 L154.0,228.5 L155.0,228.5 L156.0,228.5 L157.0,228.5 L158.0,228.5 L159.0,228.5 L160.0,228.5 L161.0,228.5 L162.0,228.5 L163.0,228.5 L164.0,228.5 L165.0,228.5 L166.0,228.5 L167.0,228.5 L168.0,228.5 L169.0,228.5 L170.0,228.5 L171.0,228.5 L172.0,228.5 L173.0,228.5 L174.0,228.5 L175.0,228.5 L176.0,228.5 L177.0,228.5 L178.0,228.5 L179.0,228.5 L180.0,228.5 L181.0,228.5 L182.0,228.5 L183.0,228.5 L184.0,228.5 L185.0,229.5 L186.0,228.5 L187.0,228.5 L188.0,228.5 L189.0,227.5 L190.0,228.5 L191.0,228.5 L192.0,228.5 L193.0,228.5 L194.0,228.5 L195.0,228.5 L196.0,228.5 L197.0,228.5 L198.0,229.5 L199.0,228.5 L200.0,228.5 L201.0,228.5 L202.0,228.5 L203.0,228.5 L204.0,228.5 L205.0,228.5 L206.0,227.5 L207.0,228.5 L208.0,228.5 L209.0,228.5 L210.0,228.5 L211.0,228.5 L212.0,228.5 L213.0,228.5 L214.0,228.5 L215.0,228.5 L216.0,228.5 L217.0,228.5 L218.0,228.5 L219.0,228.5 L220.0,228.5 L221.0,228.5 L222.0,228.5 L223.0,228.5 L224.0,228.5 L225.0,228.5 L226.0,227.5 L227.0,228.5 L228.0,228.5 L229.0,228.5 L230.0,228.5 L231.0,228.5 L232.0,228.5 L233.0,228.5 L234.0,228.5 L235.0,228.5 L236.0,228.5 L237.0,228.5 L238.0,228.5 L239.0,228.5 L240.0,228.5 L241.0,228.5 L242.0,228.5 L243.0,228.5 L244.0,228.5 L245.0,228.5 L246.0,228.5 L247.0,228.5 L248.0,228.5 L249.0,228.5 L250.0,228.5 L251.0,228.5 L252.0,228.5 L253.0,228.5 L254.0,228.5 L255.0,228.5 L256.0,228.5 L257.0,228.5 L258.0,228.5 L259.0,228.5 L260.0,228.5 L261.0,228.5 L262.0,228.5 L263.0,228.5 L264.0,228.5 L265.0,228.5 L266.0,228.5 L267.0,228.5 L268.0,228.5 L269.0,228.5 L270.0,228.5 L271.0,228.5 L272.0,228.5 L273.0,228.5 L274.0,228.5 L275.0,228.5 L276.0,229.5 L277.0,228.5 L278.0,228.5 L279.0,228.5 L280.0,228.5 L281.0,228.5 L282.0,228.5 L283.0,228.5 L284.0,228.5 L285.0,228.5 L286.0,228.5 L287.0,228.5 L288.0,228.5 L289.0,228.5 L290.0,228.5 L291.0,228.5 L292.0,228.5 L293.0,228.5 L294.0,228.5 L295.0,228.5 L296.0,228.5 L297.0,228.5 L298.0,228.5 L299.0,228.5 L300.0,228.5 L301.0,228.5 L302.0,228.5 L303.0,228.5 L304.0,228.5 L305.0,228.5 L306.0,228.5 L307.0,228.5 L308.0,228.5 L309.0,228.5 L310.0,228.5 L311.0,228.5 L312.0,228.5 L313.0,228.5 L314.0,228.5 L315.0,228.5 L316.0,228.5 L317.0,228.5 L318.0,228.5 L319.0,228.5 L320.0,228.5 L321.0,228.5 L322.0,228.5 L323.0,228.5 L324.0,228.5 L325.0,228.5 L326.0,228.5 L327.0,228.5 L328.0,228.5 L329.0,228.5 L330.0,228.5 L331.0,228.5 L332.0,228.5 L333.0,228.5 L334.0,228.5 L335.0,228.5 L336.0,228.5 L337.0,228.5 L338.0,228.5 L339.0,227.5 L340.0,228.5 L341.0,228.5 L342.0,227.5 L343.0,227.5 L344.0,227.5 L345.0,227.5 L346.0,227.5 L347.0,226.5 L348.0,226.5 L349.0,226.5 L350.0,225.5 L351.0,225.5 L352.0,225.5 L353.0,225.5 L354.0,224.5 L355.0,224.5 L356.0,224.5 L357.0,225.5 L358.0,223.5 L359.0,223.5 L360.0,222.5 L361.0,222.5 L362.0,222.5 L363.0,223.5 L364.0,222.5 L365.0,221.5 L366.0,221.5 L367.0,221.5 L368.0,220.5 L369.0,221.5 L370.0,220.5 L371.0,220.5 L372.0,220.5 L373.0,220.5 L374.0,219.5 L375.0,219.5 L376.0,219.5 L377.0,219.5 L378.0,219.5 L379.0,219.5 L380.0,218.5 L381.0,218.5 L382.0,217.5 L383.0,217.5 L384.0,218.5 L385.0,217.5 L386.0,217.5 L387.0,217.5 L388.0,217.5 L389.0,217.5 L390.0,217.5 L391.0,216.5 L392.0,216.5 L393.0,216.5 L394.0,215.5 L395.0,215.5 L396.0,215.5 L397.0,214.5 L398.0,214.5 L399.0,214.5 L400.0,214.5 L401.0,213.5 L402.0,213.5 L403.0,213.5 L404.0,212.5 L405.0,212.5 L406.0,212.5 L407.0,211.5 L408.0,211.5 L409.0,211.5 L410.0,211.5 L411.0,211.5 L412.0,211.5 L413.0,211.5 L414.0,211.5 L415.0,211.5 L416.0,211.5 L417.0,211.5 L418.0,211.5 L419.0,211.5 L420.0,211.5 L421.0,210.5 L422.0,210.5 L423.0,210.5 L424.0,210.5 L425.0,210.5 L426.0,210.5 L427.0,210.5 L428.0,210.5 L429.0,210.5 L430.0,210.5 L431.0,210.5 L432.0,210.5 L433.0,210.5 L434.0,210.5 L435.0,210.5 L436.0,211.5 L437.0,210.5 L438.0,210.5 L439.0,210.5 L440.0,210.5 L441.0,210.5 L442.0,210.5 L443.0,210.5 L444.0,210.5 L445.0,210.5 L446.0,210.5 L447.0,210.5 L448.0,210.5 L449.0,210.5 L450.0,210.5 L451.0,210.5 L452.0,210.5 L453.0,210.5 L454.0,210.5 L455.0,210.5 L456.0,210.5 L457.0,210.5 L458.0,210.5 L459.0,210.5 L460.0,210.5 L461.0,210.5 L462.0,210.5 L463.0,210.5 L464.0,210.5 L465.0,210.5 L466.0,210.5 L467.0,210.5 L468.0,210.5 L469.0,210.5 L470.0,210.5 L471.0,210.5 L472.0,210.5 L473.0,210.5 L474.0,209.5 L475.0,210.5 L476.0,210.5 L477.0,210.5 L478.0,210.5 L479.0,210.5 L480.0,210.5 L481.0,210.5 L482.0,210.5 L483.0,210.5 L484.0,210.5 L485.0,210.5 L486.0,210.5 L487.0,209.5 L488.0,210.5 L489.0,210.5 L490.0,210.5 L491.0,210.5 L492.0,210.5 L493.0,209.5 L494.0,210.5 L495.0,210.5 L496.0,210.5 L497.0,210.5 L498.0,210.5 L499.0,210.5 L500.0,210.5 L501.0,210.5 L502.0,210.5 L503.0,210.5 L504.0,210.5 L505.0,210.5 L506.0,210.5 L507.0,210.5 L508.0,210.5 L509.0,210.5 L510.0,210.5 L511.0,210.5 L512.0,210.5 L513.0,210.5 L514.0,210.5 L515.0,210.5 L516.0,210.5 L517.0,210.5 L518.0,210.5 L519.0,210.5 L520.0,210.5 L521.0,210.5 L522.0,210.5 L523.0,210.5 L524.0,210.5 L525.0,210.5 L526.0,210.5 L527.0,210.5 L528.0,210.5 L529.0,210.5 L530.0,210.5 L531.0,210.5 L532.0,210.5 L533.0,210.5 L534.0,210.5 L535.0,210.5 L536.0,210.5 L537.0,210.5 L538.0,210.5 L539.0,210.5 L540.0,210.5 L541.0,210.5 L542.0,210.5 L543.0,210.5 L544.0,210.5 L545.0,210.5 L546.0,210.5 L547.0,210.5 L548.0,210.5 L549.0,210.5 L550.0,210.5 L551.0,210.5 L552.0,210.5 L553.0,210.5 L554.0,210.5 L555.0,210.5 L556.0,210.5 L557.0,210.5 L558.0,210.5 L559.0,210.5 L560.0,210.5 L561.0,210.5 L562.0,210.5 L563.0,209.5 L564.0,210.5 L565.0,210.5 L566.0,210.5 L567.0,210.5 L568.0,210.5 L569.0,210.5 L570.0,210.5 L571.0,210.5 L572.0,210.5 L573.0,210.5 L574.0,210.5 L575.0,210.5 L576.0,210.5 L577.0,210.5 L578.0,210.5 L579.0,210.5 L580.0,210.5 L581.0,210.5 L582.0,210.5 L583.0,210.5 L584.0,210.5 L585.0,210.5 L586.0,210.5 L587.0,210.5 L588.0,210.5 L589.0,210.5 L590.0,210.5 L591.0,210.5 L592.0,210.5 L593.0,210.5 L594.0,210.5 L595.0,210.5 L596.0,210.5 L597.0,210.5 L598.0,211.5 L599.0,210.5 L600.0,210.5 L601.0,210.5 L602.0,210.5 L603.0,210.5 L604.0,210.5 L605.0,210.5 L606.0,210.5 L607.0,211.5 L608.0,210.5 L609.0,210.5 L610.0,210.5 L611.0,210.5 L612.0,210.5 L613.0,210.5 L614.0,210.5 L615.0,210.5 L616.0,210.5 L617.0,210.5 L618.0,210.5 L619.0,210.5 L620.0,210.5 L621.0,210.5 L622.0,210.5 L623.0,210.5 L624.0,210.5 L625.0,210.5 L626.0,210.5 L627.0,210.5 L628.0,210.5 L629.0,210.5 L630.0,210.5 L631.0,210.5 L632.0,210.5 L633.0,210.5 L634.0,210.5 L635.0,210.5 L636.0,210.5 L637.0,210.5 L638.0,210.5 L639.0,210.5 L640.0,210.5 L641.0,210.5 L642.0,210.5 L643.0,210.5 L644.0,210.5 L645.0,210.5 L646.0,210.5 L647.0,210.5 L648.0,210.5 L649.0,210.5 L650.0,210.5 L651.0,210.5 L652.0,210.5 L653.0,210.5 L654.0,210.5 L655.0,210.5 L656.0,210.5 L657.0,210.5 L658.0,210.5 L659.0,210.5 L660.0,210.5 L661.0,210.5 L662.0,210.5 L663.0,210.5 L664.0,210.5 L665.0,210.5 L666.0,210.5 L667.0,210.5 L668.0,210.5 L669.0,210.5 L670.0,210.5 L671.0,210.5 L672.0,210.5 L673.0,210.5 L674.0,210.5 L675.0,210.5 L676.0,210.5 L677.0,210.5 L678.0,210.5 L679.0,210.5 L680.0,210.5 L681.0,210.5 L682.0,210.5 L683.0,210.5 L684.0,210.5 L685.0,210.5 L686.0,210.5 L687.0,210.5 L688.0,210.5 L689.0,210.5 L690.0,210.5 L691.0,210.5 L692.0,210.5 L693.0,210.5 L694.0,210.5 L695.0,210.5 L696.0,210.5 L697.0,210.5 L698.0,210.5 L699.0,210.5 L700.0,210.5 L701.0,210.5 L702.0,210.5 L703.0,210.5 L704.0,210.5 L705.0,210.5 L706.0,210.5 L707.0,210.5 L708.0,210.5 L709.0,210.5 L710.0,210.5 L711.0,210.5 L712.0,210.5 L713.0,210.5 L714.0,211.5 L715.0,210.5 L716.0,210.5 L717.0,210.5 L718.0,210.5 L719.0,210.5 L720.0,210.5 L721.0,210.5 L722.0,210.5 L723.0,210.5 L724.0,210.5 L725.0,210.5 L726.0,210.5 L727.0,210.5 L728.0,209.5 L729.0,210.5 L730.0,210.5 L731.0,210.5 L732.0,210.5 L733.0,210.5 L734.0,211.5 L735.0,210.5 L736.0,210.5 L737.0,210.5 L738.0,210.5 L739.0,210.5 L740.0,210.5 L741.0,210.5 L742.0,210.5 L743.0,210.5 L744.0,210.5 L745.0,210.5 L746.0,211.5 L747.0,210.5 L748.0,210.5 L749.0,210.5 L750.0,210.5 L751.0,210.5 L752.0,210.5 L753.0,210.5 L754.0,210.5 L755.0,210.5 L756.0,210.5 L757.0,210.5 L758.0,210.5 L759.0,210.5 L760.0,210.5 L761.0,209.5 L762.0,211.5 L763.0,210.5 L764.0,210.5 L765.0,210.5" stroke="#d81414" stroke-width="1.1" fill="none"/>
 <path d="M72.0,229.3 L73.0,229.3 L74.0,229.4 L75.0,229.8 L76.0,230.8 L77.0,231.9 L78.0,232.7 L79.0,232.6 L80.0,232.1 L81.0,231.0 L82.0,230.1 L83.0,229.3 L84.0,229.3 L85.0,229.2 L86.0,229.3 L87.0,229.7 L88.0,229.6 L89.0,229.6 L90.0,229.6 L91.0,230.0 L92.0,231.2 L93.0,232.1 L94.0,232.6 L95.0,232.5 L96.0,232.0 L97.0,230.6 L98.0,229.8 L99.0,229.5 L100.0,229.4 L101.0,229.2 L102.0,229.4 L103.0,229.2 L104.0,229.7 L105.0,229.6 L106.0,229.4 L107.0,230.3 L108.0,231.7 L109.0,232.2 L110.0,232.6 L111.0,232.4 L112.0,231.5 L113.0,230.5 L114.0,229.4 L115.0,229.3 L116.0,229.2 L117.0,229.2 L118.0,229.6 L119.0,229.1 L120.0,229.1 L121.0,229.4 L122.0,229.4 L123.0,230.7 L124.0,231.6 L125.0,232.1 L126.0,232.6 L127.0,231.8 L128.0,231.2 L129.0,230.0 L130.0,229.4 L131.0,229.2 L132.0,229.2 L133.0,229.5 L134.0,229.2 L135.0,229.3 L136.0,229.6 L137.0,229.1 L138.0,229.5 L139.0,230.7 L140.0,231.9 L141.0,232.3 L142.0,232.1 L143.0,231.7 L144.0,230.8 L145.0,229.8 L146.0,229.0 L147.0,229.4 L148.0,229.5 L149.0,229.5 L150.0,229.4 L151.0,229.5 L152.0,229.0 L153.0,229.1 L154.0,230.3 L155.0,231.3 L156.0,231.8 L157.0,232.5 L158.0,232.2 L159.0,231.8 L160.0,230.5 L161.0,229.3 L162.0,229.2 L163.0,229.0 L164.0,229.2 L165.0,229.5 L166.0,229.1 L167.0,228.9 L168.0,228.9 L169.0,229.0 L170.0,230.4 L171.0,231.2 L172.0,231.8 L173.0,232.0 L174.0,232.3 L175.0,231.3 L176.0,230.2 L177.0,228.9 L178.0,228.9 L179.0,229.0 L180.0,229.3 L181.0,229.0 L182.0,228.9 L183.0,229.2 L184.0,229.0 L185.0,229.6 L186.0,230.3 L187.0,231.4 L188.0,232.2 L189.0,232.1 L190.0,232.1 L191.0,231.0 L192.0,229.8 L193.0,229.1 L194.0,228.9 L195.0,229.1 L196.0,229.0 L197.0,229.4 L198.0,229.3 L199.0,229.1 L200.0,228.8 L201.0,229.4 L202.0,230.6 L203.0,231.4 L204.0,231.9 L205.0,232.3 L206.0,231.4 L207.0,230.5 L208.0,229.9 L209.0,229.1 L210.0,229.4 L211.0,229.0 L212.0,229.3 L213.0,229.2 L214.0,229.3 L215.0,229.2 L216.0,229.1 L217.0,229.6 L218.0,230.7 L219.0,231.9 L220.0,232.3 L221.0,232.2 L222.0,231.3 L223.0,230.6 L224.0,229.5 L225.0,229.1 L226.0,229.2 L227.0,229.1 L228.0,229.1 L229.0,229.1 L230.0,228.9 L231.0,229.3 L232.0,229.3 L233.0,229.8 L234.0,231.4 L235.0,232.0 L236.0,232.1 L237.0,231.5 L238.0,231.4 L239.0,229.9 L240.0,229.3 L241.0,229.1 L242.0,228.7 L243.0,228.8 L244.0,229.1 L245.0,229.0 L246.0,229.1 L247.0,229.2 L248.0,229.0 L249.0,230.0 L250.0,231.5 L251.0,231.5 L252.0,232.2 L253.0,231.4 L254.0,231.1 L255.0,230.0 L256.0,229.2 L257.0,229.0 L258.0,229.2 L259.0,228.8 L260.0,229.0 L261.0,228.8 L262.0,229.2 L263.0,229.1 L264.0,229.4 L265.0,230.5 L266.0,231.1 L267.0,231.6 L268.0,231.9 L269.0,231.4 L270.0,230.8 L271.0,229.5 L272.0,228.7 L273.0,228.8 L274.0,229.1 L275.0,228.9 L276.0,228.6 L277.0,229.1 L278.0,229.1 L279.0,228.6 L280.0,229.7 L281.0,230.6 L282.0,231.7 L283.0,231.7 L284.0,231.6 L285.0,231.2 L286.0,230.6 L287.0,228.9 L288.0,228.6 L289.0,228.9 L290.0,229.1 L291.0,228.9 L292.0,228.8 L293.0,229.1 L294.0,229.0 L295.0,228.6 L296.0,230.1 L297.0,230.7 L298.0,231.5 L299.0,232.0 L300.0,231.6 L301.0,231.1 L302.0,229.8 L303.0,229.0 L304.0,228.6 L305.0,228.6 L306.0,228.8 L307.0,228.7 L308.0,228.8 L309.0,229.0 L310.0,228.9 L311.0,228.7 L312.0,230.0 L313.0,231.1 L314.0,231.6 L315.0,231.9 L316.0,231.4 L317.0,230.4 L318.0,229.5 L319.0,229.0 L320.0,228.7 L321.0,228.9 L322.0,229.1 L323.0,228.8 L324.0,228.9 L325.0,228.8 L326.0,228.6 L327.0,229.5 L328.0,230.3 L329.0,231.4 L330.0,231.6 L331.0,231.9 L332.0,231.4 L333.0,230.5 L334.0,229.3 L335.0,228.5 L336.0,228.9 L337.0,228.6 L338.0,228.8 L339.0,228.5 L340.0,228.5 L341.0,228.5 L343.0,229.9 L345.0,229.9 L347.0,229.8 L349.0,228.2 L351.0,227.5 L353.0,228.0 L355.0,228.2 L357.0,228.4 L359.0,229.6 L361.0,229.5 L363.0,229.8 L365.0,228.3 L367.0,227.7 L369.0,228.2 L371.0,227.5 L373.0,227.9 L375.0,229.4 L377.0,229.8 L379.0,229.6 L381.0,230.0 L383.0,229.8 L385.0,228.8 L387.0,229.6 L389.0,229.5 L391.0,230.8 L393.0,231.5 L395.0,232.3 L397.0,233.5 L399.0,232.4 L401.0,232.8 L403.0,231.8 L405.0,232.3 L407.0,233.4 L409.0,234.0 L411.0,234.0 L413.0,234.9 L415.0,234.7 L417.0,233.6 L419.0,233.0 L421.0,234.1 L423.0,234.0 L425.0,234.4 L427.0,235.5 L429.0,235.6 L431.0,236.3 L433.0,235.4 L435.0,234.3 L437.0,234.9 L439.0,234.1 L441.0,235.0 L443.0,235.5 L445.0,237.1 L447.0,236.5 L449.0,236.7 L451.0,235.4 L453.0,235.3 L455.0,235.4 L457.0,235.5 L459.0,236.0 L461.0,236.7 L463.0,237.0 L465.0,237.0 L467.0,235.6 L469.0,235.4 L471.0,234.6 L473.0,235.5 L475.0,236.2 L477.0,235.6 L479.0,236.2 L481.0,237.1 L483.0,236.4 L485.0,234.9 L487.0,235.2 L489.0,235.4 L491.0,234.9 L493.0,235.5 L495.0,236.4 L497.0,237.2 L499.0,236.1 L501.0,235.5 L503.0,234.6 L505.0,234.8 L507.0,234.7 L509.0,234.9 L511.0,235.8 L513.0,235.8 L515.0,236.3 L517.0,236.8 L519.0,235.5 L521.0,234.5 L523.0,235.2 L525.0,234.7 L527.0,235.2 L529.0,235.6 L531.0,236.1 L533.0,236.0 L535.0,235.4 L537.0,235.6 L539.0,234.3 L541.0,234.3 L543.0,235.4 L545.0,236.5 L547.0,236.2 L549.0,236.9 L551.0,235.9 L553.0,235.5 L555.0,234.9 L557.0,235.2 L559.0,235.3 L561.0,235.6 L563.0,236.7 L565.0,236.4 L567.0,236.2 L569.0,236.4 L571.0,235.1 L573.0,235.0 L575.0,234.4 L577.0,235.8 L579.0,236.1 L581.0,236.1 L583.0,237.1 L585.0,236.1 L587.0,235.2 L589.0,234.4 L591.0,234.0 L593.0,234.5 L595.0,235.8 L597.0,235.7 L599.0,236.2 L601.0,236.3 L603.0,235.8 L605.0,234.9 L607.0,235.0 L609.0,234.3 L611.0,235.0 L613.0,235.8 L615.0,235.9 L617.0,236.1 L619.0,235.6 L621.0,235.7 L623.0,234.3 L625.0,234.8 L627.0,234.5 L629.0,235.8 L631.0,236.4 L633.0,236.3 L635.0,237.0 L637.0,236.0 L639.0,235.1 L641.0,233.9 L643.0,234.5 L645.0,234.9 L647.0,235.9 L649.0,237.0 L651.0,237.0 L653.0,235.5 L655.0,235.6 L657.0,235.4 L659.0,234.6 L661.0,234.3 L663.0,236.1 L665.0,236.1 L667.0,237.2 L669.0,236.9 L671.0,236.2 L673.0,235.6 L675.0,234.0 L677.0,235.0 L679.0,234.9 L681.0,235.4 L683.0,236.3 L685.0,236.6 L687.0,235.4 L689.0,235.3 L691.0,235.1 L693.0,234.5 L695.0,234.9 L697.0,235.2 L699.0,236.9 L701.0,236.2 L703.0,236.6 L705.0,235.9 L707.0,234.3 L709.0,235.3 L711.0,234.3 L713.0,235.8 L715.0,236.5 L717.0,237.0 L719.0,237.0 L721.0,235.9 L723.0,235.3 L725.0,234.5 L727.0,235.1 L729.0,234.2 L731.0,235.0 L733.0,236.8 L735.0,236.9 L737.0,236.6 L739.0,236.3 L741.0,235.0 L743.0,235.0 L745.0,234.5 L747.0,235.7 L749.0,235.3 L751.0,236.3 L753.0,236.6 L755.0,236.4 L757.0,235.2 L759.0,235.0 L761.0,235.2 L763.0,234.7 L765.0,235.1" stroke="#14b4c4" stroke-width="1.1" fill="none"/>
 <path d="M72.0,312.6 L73.0,313.3 L74.0,313.9 L75.0,314.4 L76.0,314.2 L77.0,314.1 L78.0,313.0 L79.0,312.6 L80.0,312.3 L81.0,311.5 L82.0,311.3 L83.0,310.6 L84.0,311.1 L85.0,311.4 L86.0,312.2 L87.0,312.9 L88.0,313.1 L89.0,313.7 L90.0,313.9 L91.0,314.3 L92.0,313.8 L93.0,312.8 L94.0,312.5 L95.0,311.4 L96.0,311.3 L97.0,310.7 L98.0,310.6 L99.0,311.5 L100.0,311.6 L101.0,312.3 L102.0,313.5 L103.0,314.0 L104.0,313.9 L105.0,314.4 L106.0,313.9 L107.0,313.4 L108.0,312.5 L109.0,312.3 L110.0,311.5 L111.0,311.3 L112.0,311.2 L113.0,310.9 L114.0,311.4 L115.0,311.9 L116.0,312.6 L117.0,313.2 L118.0,313.8 L119.0,314.2 L120.0,313.6 L121.0,313.7 L122.0,312.9 L123.0,312.2 L124.0,311.9 L125.0,311.2 L126.0,310.8 L127.0,310.9 L128.0,311.4 L129.0,311.5 L130.0,312.8 L131.0,312.8 L132.0,313.9 L133.0,314.3 L134.0,313.7 L135.0,314.0 L136.0,313.2 L137.0,312.7 L138.0,311.6 L139.0,311.1 L140.0,310.8 L141.0,311.2 L142.0,310.9 L143.0,311.7 L144.0,312.5 L145.0,313.2 L146.0,313.4 L147.0,313.8 L148.0,314.1 L149.0,314.2 L150.0,313.3 L151.0,313.2 L152.0,312.5 L153.0,311.9 L154.0,310.9 L155.0,311.2 L156.0,310.7 L157.0,311.2 L158.0,311.9 L159.0,312.8 L160.0,313.1 L161.0,314.0 L162.0,314.1 L163.0,313.9 L164.0,313.7 L165.0,313.1 L166.0,312.4 L167.0,311.7 L168.0,311.5 L169.0,311.4 L170.0,310.7 L171.0,310.8 L172.0,311.9 L173.0,312.2 L174.0,312.8 L175.0,313.3 L176.0,314.0 L177.0,314.3 L178.0,314.0 L179.0,313.5 L180.0,312.7 L181.0,312.6 L182.0,311.3 L183.0,311.2 L184.0,311.2 L185.0,310.7 L186.0,311.4 L187.0,312.1 L188.0,312.6 L189.0,313.4 L190.0,313.4 L191.0,314.0 L192.0,313.8 L193.0,314.1 L194.0,313.2 L195.0,312.6 L196.0,312.3 L197.0,311.6 L198.0,311.3 L199.0,310.9 L200.0,311.1 L201.0,311.7 L202.0,312.1 L203.0,312.7 L204.0,313.4 L205.0,313.7 L206.0,314.0 L207.0,314.3 L208.0,313.9 L209.0,313.1 L210.0,312.3 L211.0,311.6 L212.0,310.9 L213.0,310.8 L214.0,311.2 L215.0,311.5 L216.0,311.7 L217.0,312.7 L218.0,313.4 L219.0,313.9 L220.0,314.2 L221.0,314.3 L222.0,313.7 L223.0,313.5 L224.0,312.5 L225.0,312.0 L226.0,311.6 L227.0,311.1 L228.0,310.8 L229.0,311.4 L230.0,311.6 L231.0,312.2 L232.0,312.5 L233.0,313.5 L234.0,313.7 L235.0,314.2 L236.0,314.0 L237.0,313.8 L238.0,313.1 L239.0,312.5 L240.0,311.6 L241.0,311.3 L242.0,311.1 L243.0,311.2 L244.0,311.2 L245.0,312.1 L246.0,312.8 L247.0,313.3 L248.0,314.1 L249.0,314.4 L250.0,314.1 L251.0,313.8 L252.0,313.1 L253.0,312.9 L254.0,312.3 L255.0,311.4 L256.0,311.1 L257.0,311.1 L258.0,311.2 L259.0,311.3 L260.0,312.4 L261.0,312.9 L262.0,313.6 L263.0,313.9 L264.0,314.2 L265.0,314.2 L266.0,313.7 L267.0,313.2 L268.0,312.0 L269.0,311.4 L270.0,311.1 L271.0,311.0 L272.0,310.8 L273.0,311.4 L274.0,311.9 L275.0,312.2 L276.0,313.2 L277.0,313.5 L278.0,313.7 L279.0,313.8 L280.0,313.7 L281.0,313.1 L282.0,312.5 L283.0,311.7 L284.0,311.4 L285.0,310.9 L286.0,311.0 L287.0,311.1 L288.0,311.3 L289.0,312.4 L290.0,312.5 L291.0,313.4 L292.0,313.8 L293.0,314.0 L294.0,313.7 L295.0,313.8 L296.0,312.9 L297.0,312.0 L298.0,311.8 L299.0,310.9 L300.0,311.0 L301.0,310.8 L302.0,311.3 L303.0,312.1 L304.0,312.7 L305.0,313.1 L306.0,313.9 L307.0,314.1 L308.0,314.0 L309.0,313.6 L310.0,313.4 L311.0,312.7 L312.0,312.3 L313.0,311.7 L314.0,311.1 L315.0,310.8 L316.0,311.4 L317.0,311.2 L318.0,311.9 L319.0,312.9 L320.0,313.5 L321.0,313.7 L322.0,314.2 L323.0,314.3 L324.0,313.5 L325.0,313.0 L326.0,312.1 L327.0,311.5 L328.0,311.5 L329.0,310.8 L330.0,311.3 L331.0,311.6 L332.0,311.9 L333.0,312.3 L334.0,313.5 L335.0,313.7 L336.0,314.0 L337.0,314.0 L338.0,314.2 L339.0,313.3 L340.0,312.5 L341.0,312.4 L342.0,312.0 L343.0,312.3 L344.0,312.5 L345.0,313.0 L346.0,314.2 L347.0,315.4 L348.0,316.1 L349.0,317.6 L350.0,318.4 L351.0,319.6 L352.0,319.9 L353.0,319.7 L354.0,319.6 L355.0,319.4 L356.0,319.9 L357.0,319.4 L358.0,319.9 L359.0,320.4 L360.0,321.4 L361.0,322.3 L362.0,323.5 L363.0,324.1 L364.0,325.5 L365.0,325.9 L366.0,326.5 L367.0,326.5 L368.0,326.3 L369.0,326.2 L370.0,325.9 L371.0,325.6 L372.0,325.9 L373.0,326.1 L374.0,326.3 L375.0,327.3 L376.0,328.4 L377.0,330.1 L378.0,331.4 L379.0,332.3 L380.0,332.8 L381.0,333.9 L382.0,333.9 L383.0,334.1 L384.0,334.2 L385.0,334.1 L386.0,334.2 L387.0,334.9 L388.0,335.3 L389.0,336.3 L390.0,337.8 L391.0,338.7 L392.0,340.1 L393.0,341.7 L394.0,342.2 L395.0,343.4 L396.0,343.8 L397.0,343.8 L398.0,343.7 L399.0,344.0 L400.0,344.2 L401.0,343.6 L402.0,344.0 L403.0,344.5 L404.0,345.2 L405.0,346.0 L406.0,346.8 L407.0,348.1 L408.0,349.0 L409.0,348.9 L410.0,349.2 L411.0,349.5 L412.0,349.2 L413.0,348.7 L414.0,347.9 L415.0,348.2 L416.0,348.4 L417.0,348.7 L418.0,349.1 L419.0,349.5 L420.0,351.0 L421.0,351.5 L422.0,352.7 L423.0,353.5 L424.0,353.6 L425.0,353.2 L426.0,353.1 L427.0,353.1 L428.0,352.2 L429.0,352.2 L430.0,351.9 L431.0,351.9 L432.0,352.7 L433.0,353.0 L434.0,353.9 L435.0,355.1 L436.0,355.8 L437.0,356.5 L438.0,357.3 L439.0,357.5 L440.0,357.5 L441.0,356.7 L442.0,356.5 L443.0,356.0 L444.0,356.0 L445.0,355.9 L446.0,356.3 L447.0,356.2 L448.0,356.5 L449.0,357.6 L450.0,357.9 L451.0,358.7 L452.0,359.0 L453.0,359.3 L454.0,358.7 L455.0,358.3 L456.0,357.4 L457.0,356.9 L458.0,356.1 L459.0,356.0 L460.0,355.7 L461.0,355.6 L462.0,356.0 L463.0,356.7 L464.0,357.5 L465.0,357.7 L466.0,358.5 L467.0,358.6 L468.0,358.0 L469.0,357.9 L470.0,356.9 L471.0,356.1 L472.0,355.8 L473.0,354.9 L474.0,355.1 L475.0,354.8 L476.0,354.9 L477.0,355.7 L478.0,355.8 L479.0,356.9 L480.0,356.9 L481.0,357.3 L482.0,357.9 L483.0,357.4 L484.0,356.6 L485.0,355.8 L486.0,355.7 L487.0,354.9 L488.0,354.6 L489.0,354.0 L490.0,354.5 L491.0,354.7 L492.0,355.2 L493.0,356.0 L494.0,356.8 L495.0,357.0 L496.0,357.2 L497.0,356.9 L498.0,357.0 L499.0,356.2 L500.0,355.6 L501.0,354.7 L502.0,354.5 L503.0,354.0 L504.0,354.0 L505.0,354.3 L506.0,355.0 L507.0,355.4 L508.0,355.8 L509.0,356.3 L510.0,356.7 L511.0,356.6 L512.0,357.0 L513.0,356.2 L514.0,355.7 L515.0,354.4 L516.0,354.2 L517.0,354.0 L518.0,353.7 L519.0,353.8 L520.0,354.2 L521.0,354.6 L522.0,355.3 L523.0,355.9 L524.0,356.4 L525.0,356.6 L526.0,356.8 L527.0,355.9 L528.0,355.4 L529.0,354.7 L530.0,353.9 L531.0,353.5 L532.0,353.2 L533.0,353.4 L534.0,353.4 L535.0,354.6 L536.0,354.9 L537.0,355.9 L538.0,356.3 L539.0,356.6 L540.0,356.5 L541.0,356.6 L542.0,355.5 L543.0,355.2 L544.0,354.3 L545.0,354.0 L546.0,353.6 L547.0,353.1 L548.0,353.3 L549.0,353.6 L550.0,354.4 L551.0,355.0 L552.0,355.8 L553.0,356.6 L554.0,356.4 L555.0,356.2 L556.0,356.0 L557.0,355.2 L558.0,354.9 L559.0,354.2 L560.0,353.3 L561.0,353.1 L562.0,353.4 L563.0,353.9 L564.0,354.3 L565.0,354.8 L566.0,355.9 L567.0,355.7 L568.0,356.1 L569.0,356.6 L570.0,356.1 L571.0,355.3 L572.0,355.0 L573.0,354.6 L574.0,353.7 L575.0,353.2 L576.0,352.9 L577.0,353.1 L578.0,354.1 L579.0,354.4 L580.0,355.4 L581.0,355.4 L582.0,356.0 L583.0,356.1 L584.0,356.2 L585.0,355.6 L586.0,355.1 L587.0,354.5 L588.0,353.8 L589.0,353.1 L590.0,352.8 L591.0,353.5 L592.0,353.3 L593.0,354.1 L594.0,354.7 L595.0,355.4 L596.0,355.6 L597.0,356.1 L598.0,356.0 L599.0,356.1 L600.0,355.8 L601.0,354.9 L602.0,354.4 L603.0,353.4 L604.0,352.9 L605.0,353.1 L606.0,353.3 L607.0,353.8 L608.0,354.2 L609.0,355.1 L610.0,355.8 L611.0,356.4 L612.0,356.1 L613.0,356.1 L614.0,356.0 L615.0,355.0 L616.0,354.2 L617.0,353.7 L618.0,353.0 L619.0,353.2 L620.0,353.3 L621.0,353.3 L622.0,353.7 L623.0,354.3 L624.0,355.1 L625.0,355.5 L626.0,356.1 L627.0,356.2 L628.0,355.7 L629.0,355.1 L630.0,354.9 L631.0,353.7 L632.0,353.3 L633.0,352.9 L634.0,352.9 L635.0,352.9 L636.0,353.5 L637.0,354.1 L638.0,355.1 L639.0,355.5 L640.0,356.2 L641.0,356.2 L642.0,356.2 L643.0,355.7 L644.0,355.0 L645.0,354.6 L646.0,353.8 L647.0,353.5 L648.0,353.1 L649.0,353.1 L650.0,353.1 L651.0,354.0 L652.0,354.4 L653.0,354.9 L654.0,355.4 L655.0,355.8 L656.0,355.9 L657.0,355.9 L658.0,355.1 L659.0,354.3 L660.0,354.1 L661.0,353.4 L662.0,352.6 L663.0,352.5 L664.0,352.8 L665.0,353.4 L666.0,354.3 L667.0,355.1 L668.0,355.5 L669.0,355.6 L670.0,356.0 L671.0,355.8 L672.0,355.4 L673.0,354.6 L674.0,354.3 L675.0,353.8 L676.0,353.2 L677.0,352.5 L678.0,352.8 L679.0,352.9 L680.0,353.8 L681.0,354.3 L682.0,355.3 L683.0,355.8 L684.0,355.6 L685.0,355.8 L686.0,356.0 L687.0,355.1 L688.0,354.5 L689.0,353.8 L690.0,353.4 L691.0,353.1 L692.0,352.7 L693.0,353.2 L694.0,353.4 L695.0,353.7 L696.0,354.9 L697.0,355.2 L698.0,355.4 L699.0,356.2 L700.0,355.4 L701.0,355.4 L702.0,354.8 L703.0,354.4 L704.0,353.4 L705.0,352.7 L706.0,352.5 L707.0,352.5 L708.0,353.1 L709.0,353.5 L710.0,354.4 L711.0,354.7 L712.0,355.3 L713.0,355.6 L714.0,356.1 L715.0,355.8 L716.0,355.3 L717.0,354.5 L718.0,353.6 L719.0,352.8 L720.0,352.9 L721.0,352.6 L722.0,352.4 L723.0,353.0 L724.0,353.5 L725.0,354.7 L726.0,355.4 L727.0,355.4 L728.0,356.0 L729.0,355.5 L730.0,355.4 L731.0,354.9 L732.0,354.1 L733.0,353.5 L734.0,352.7 L735.0,352.2 L736.0,352.6 L737.0,353.0 L738.0,353.2 L739.0,354.0 L740.0,354.7 L741.0,355.0 L742.0,355.5 L743.0,355.6 L744.0,355.4 L745.0,355.1 L746.0,354.2 L747.0,353.9 L748.0,353.2 L749.0,352.9 L750.0,352.6 L751.0,352.8 L752.0,353.1 L753.0,353.9 L754.0,354.3 L755.0,355.1 L756.0,355.6 L757.0,355.6 L758.0,355.4 L759.0,354.8 L760.0,354.2 L761.0,353.7 L762.0,353.2 L763.0,352.9 L764.0,352.6 L765.0,352.3" stroke="#d0c818" stroke-width="1.1" fill="none"/>
 <!-- cursors -->
 <path d="M335.5,68 V383" stroke="#e01010" stroke-width="1"/>
 <path d="M376.5,68 V383" stroke="#10c0d0" stroke-width="1"/>
 <!-- value box -->
 <rect x="72.5" y="68.5" width="36" height="14" fill="#000" stroke="#8c8c8c"/>
 <text x="77.5" y="80.3" font-size="11" fill="#e8e8e8" textLength="28.5" lengthAdjust="spacingAndGlyphs">-17.57</text>
 <text x="41.8" y="77" fill="#e00000" stroke="#e00000" stroke-width="0.25" font-size="11" text-anchor="start" textLength="23.5" lengthAdjust="spacingAndGlyphs">1.800</text>
<text x="41.8" y="97" fill="#e00000" stroke="#e00000" stroke-width="0.25" font-size="11" text-anchor="start" textLength="23.5" lengthAdjust="spacingAndGlyphs">1.600</text>
<text x="41.8" y="117" fill="#e00000" stroke="#e00000" stroke-width="0.25" font-size="11" text-anchor="start" textLength="23.5" lengthAdjust="spacingAndGlyphs">1.400</text>
<text x="41.8" y="137" fill="#e00000" stroke="#e00000" stroke-width="0.25" font-size="11" text-anchor="start" textLength="23.5" lengthAdjust="spacingAndGlyphs">1.200</text>
<text x="41.8" y="157" fill="#e00000" stroke="#e00000" stroke-width="0.25" font-size="11" text-anchor="start" textLength="23.5" lengthAdjust="spacingAndGlyphs">1.000</text>
<text x="772" y="77" fill="#00b8c8" stroke="#00b8c8" stroke-width="0.25" font-size="11" text-anchor="start" textLength="24" lengthAdjust="spacingAndGlyphs">0.700</text>
<text x="772" y="97" fill="#00b8c8" stroke="#00b8c8" stroke-width="0.25" font-size="11" text-anchor="start" textLength="24" lengthAdjust="spacingAndGlyphs">0.650</text>
<text x="772" y="117" fill="#00b8c8" stroke="#00b8c8" stroke-width="0.25" font-size="11" text-anchor="start" textLength="24" lengthAdjust="spacingAndGlyphs">0.600</text>
<text x="772" y="137" fill="#00b8c8" stroke="#00b8c8" stroke-width="0.25" font-size="11" text-anchor="start" textLength="24" lengthAdjust="spacingAndGlyphs">0.550</text>
<text x="772" y="157" fill="#00b8c8" stroke="#00b8c8" stroke-width="0.25" font-size="11" text-anchor="start" textLength="24" lengthAdjust="spacingAndGlyphs">0.500</text>
<text x="46.9" y="190" fill="#e00000" stroke="#e00000" stroke-width="0.25" font-size="11" text-anchor="start" textLength="18.4" lengthAdjust="spacingAndGlyphs">80.0</text>
<text x="46.9" y="217" fill="#e00000" stroke="#e00000" stroke-width="0.25" font-size="11" text-anchor="start" textLength="18.4" lengthAdjust="spacingAndGlyphs">60.0</text>
<text x="46.9" y="243" fill="#e00000" stroke="#e00000" stroke-width="0.25" font-size="11" text-anchor="start" textLength="18.4" lengthAdjust="spacingAndGlyphs">40.0</text>
<text x="46.9" y="270" fill="#e00000" stroke="#e00000" stroke-width="0.25" font-size="11" text-anchor="start" textLength="18.4" lengthAdjust="spacingAndGlyphs">20.0</text>
<text x="772" y="190" fill="#00b8c8" stroke="#00b8c8" stroke-width="0.25" font-size="11" text-anchor="start" textLength="18.4" lengthAdjust="spacingAndGlyphs">80.0</text>
<text x="772" y="217" fill="#00b8c8" stroke="#00b8c8" stroke-width="0.25" font-size="11" text-anchor="start" textLength="18.4" lengthAdjust="spacingAndGlyphs">60.0</text>
<text x="772" y="243" fill="#00b8c8" stroke="#00b8c8" stroke-width="0.25" font-size="11" text-anchor="start" textLength="18.4" lengthAdjust="spacingAndGlyphs">40.0</text>
<text x="772" y="270" fill="#00b8c8" stroke="#00b8c8" stroke-width="0.25" font-size="11" text-anchor="start" textLength="18.4" lengthAdjust="spacingAndGlyphs">20.0</text>
<text x="42.3" y="292" fill="#d8d000" stroke="#d8d000" stroke-width="0.25" font-size="11" text-anchor="start" textLength="23" lengthAdjust="spacingAndGlyphs">10.00</text>
<text x="47.8" y="316" fill="#d8d000" stroke="#d8d000" stroke-width="0.25" font-size="11" text-anchor="start" textLength="17.5" lengthAdjust="spacingAndGlyphs">0.00</text>
<text x="38.5" y="339" fill="#d8d000" stroke="#d8d000" stroke-width="0.25" font-size="11" text-anchor="start" textLength="26.8" lengthAdjust="spacingAndGlyphs">-10.00</text>
<text x="38.5" y="363" fill="#d8d000" stroke="#d8d000" stroke-width="0.25" font-size="11" text-anchor="start" textLength="26.8" lengthAdjust="spacingAndGlyphs">-20.00</text>
<text x="54.0" y="398.5" fill="#c8c8c8" stroke="#c8c8c8" stroke-width="0.25" font-size="11" text-anchor="start" textLength="36.8" lengthAdjust="spacingAndGlyphs">16:45:00</text>
<text x="123.3" y="398.5" fill="#c8c8c8" stroke="#c8c8c8" stroke-width="0.25" font-size="11" text-anchor="start" textLength="36.8" lengthAdjust="spacingAndGlyphs">16:45:30</text>
<text x="192.6" y="398.5" fill="#c8c8c8" stroke="#c8c8c8" stroke-width="0.25" font-size="11" text-anchor="start" textLength="36.8" lengthAdjust="spacingAndGlyphs">16:46:00</text>
<text x="262.0" y="398.5" fill="#c8c8c8" stroke="#c8c8c8" stroke-width="0.25" font-size="11" text-anchor="start" textLength="36.8" lengthAdjust="spacingAndGlyphs">16:46:30</text>
<text x="331.3" y="398.5" fill="#c8c8c8" stroke="#c8c8c8" stroke-width="0.25" font-size="11" text-anchor="start" textLength="36.8" lengthAdjust="spacingAndGlyphs">16:47:00</text>
<text x="400.6" y="398.5" fill="#c8c8c8" stroke="#c8c8c8" stroke-width="0.25" font-size="11" text-anchor="start" textLength="36.8" lengthAdjust="spacingAndGlyphs">16:47:30</text>
<text x="469.9" y="398.5" fill="#c8c8c8" stroke="#c8c8c8" stroke-width="0.25" font-size="11" text-anchor="start" textLength="36.8" lengthAdjust="spacingAndGlyphs">16:48:00</text>
<text x="539.2" y="398.5" fill="#c8c8c8" stroke="#c8c8c8" stroke-width="0.25" font-size="11" text-anchor="start" textLength="36.8" lengthAdjust="spacingAndGlyphs">16:48:30</text>
<text x="608.6" y="398.5" fill="#c8c8c8" stroke="#c8c8c8" stroke-width="0.25" font-size="11" text-anchor="start" textLength="36.8" lengthAdjust="spacingAndGlyphs">16:49:00</text>
<text x="677.9" y="398.5" fill="#c8c8c8" stroke="#c8c8c8" stroke-width="0.25" font-size="11" text-anchor="start" textLength="36.8" lengthAdjust="spacingAndGlyphs">16:49:30</text>
 <!-- annotations -->
 <g fill="#f0f0f0" font-size="14" font-family="Liberation Serif">
  <text x="130" y="124.6" textLength="162" lengthAdjust="spacingAndGlyphs">龙一联压力下降了0.194MPa</text>
  <text x="158" y="163" textLength="163.5" lengthAdjust="spacingAndGlyphs">杏西联压力下降了0.041MPa</text>
  <text x="514.6" y="193.3" textLength="195.6" lengthAdjust="spacingAndGlyphs">龙一联瞬时流量上升了12.86m³/h</text>
  <text x="517.8" y="263.5" textLength="184.2" lengthAdjust="spacingAndGlyphs">杏西联瞬时流量下降了4.99m³/h</text>
  <text x="407.5" y="313.8" textLength="187" lengthAdjust="spacingAndGlyphs">瞬时输差负向增大至-17.85m³/h</text>
 </g>
 <g stroke="#f0f0f0" stroke-width="2" fill="none">
  <path d="M298.2,120.8 L325.5,107.5"/><path d="M333.6,103.6 L323.7,112.9 L325.5,107.5 L320.2,105.7Z" fill="#f0f0f0" stroke-width="0.6"/>
<path d="M323.3,158.2 L365.3,141.0"/><path d="M373.6,137.6 L363.1,146.2 L365.3,141.0 L360.1,138.8Z" fill="#f0f0f0" stroke-width="0.6"/>
<path d="M512.0,189.5 L474.9,204.9"/><path d="M466.6,208.4 L477.1,199.7 L474.9,204.9 L480.1,207.1Z" fill="#f0f0f0" stroke-width="0.6"/>
<path d="M513.5,260.0 L484.4,243.9"/><path d="M476.5,239.5 L489.8,242.3 L484.4,243.9 L485.9,249.3Z" fill="#f0f0f0" stroke-width="0.6"/>
<path d="M481.7,317.9 L452.1,349.7"/><path d="M446.0,356.3 L451.9,344.1 L452.1,349.7 L457.8,349.5Z" fill="#f0f0f0" stroke-width="0.6"/>
 </g>
</svg>

<!-- scroll bar -->
<div class="a" style="left:38px;top:403px;width:762px;height:19px;background:linear-gradient(#fff 0,#fff 1px,#efeee6 1px,#f1f0ea 5px,#fbfbf6 9px,#fcfcf9 17px,#d6cebe 18px,#d6cebe 19px)"></div>
<div class="a" style="left:38px;top:404px;width:17px;height:15px;border:1px solid #6a80a0;border-radius:2px;background:linear-gradient(#f8f6ee,#e8e4d4)"></div>
<svg class="a" style="left:42px;top:406px" width="13" height="12"><rect x="2" y="2" width="3" height="8" fill="#1048c0"/><path d="M11,2 V10 L6,6Z" fill="#1048c0"/></svg>
<div class="a" style="left:58px;top:405px;width:12px;height:15px;background:linear-gradient(90deg,#c8d8f8,#b8ccf4);border-radius:1px"></div>
<svg class="a" style="left:60px;top:408px" width="8" height="10"><path d="M6,1 L2,5 L6,9" stroke="#3a4a70" stroke-width="1.5" fill="none"/></svg>
<div class="a" style="left:767px;top:405px;width:11px;height:15px;background:linear-gradient(90deg,#c8d8f8,#b8ccf4);border-radius:1px"></div>
<svg class="a" style="left:769px;top:408px" width="8" height="10"><path d="M2,1 L6,5 L2,9" stroke="#3a4a70" stroke-width="1.5" fill="none"/></svg>
<div class="a" style="left:780px;top:404px;width:17px;height:15px;border:1px solid #6a80a0;border-radius:2px;background:linear-gradient(#f8f6ee,#e8e4d4)"></div>
<svg class="a" style="left:782.5px;top:406px" width="13" height="12"><rect x="8" y="2" width="3" height="8" fill="#1048c0"/><path d="M2,2 V10 L7,6Z" fill="#1048c0"/></svg>


<!-- calendar -->
<div class="a" style="left:3px;top:422px;width:208px;height:120px;background:#fff"></div>
<div class="a" style="left:3px;top:422px;width:208px;height:24px;background:#0a5ae6"></div>
<div class="a" style="left:6px;top:427px;width:16px;height:12px;border:1px solid #f0f4ff;background:linear-gradient(#e4ecfc,#b8ccf4);border-radius:1px"></div>
<svg class="a" style="left:10px;top:429px" width="8" height="9"><path d="M5,1 L2,4.5 L5,8" stroke="#303850" stroke-width="1.5" fill="none"/></svg>
<div class="a" style="left:190px;top:427px;width:16px;height:12px;border:1px solid #f0f4ff;background:linear-gradient(#e4ecfc,#b8ccf4);border-radius:1px"></div>
<svg class="a" style="left:195px;top:429px" width="8" height="9"><path d="M2,1 L5,4.5 L2,8" stroke="#303850" stroke-width="1.5" fill="none"/></svg>
<div class="a" style="left:82px;top:428.5px;font-size:11px;line-height:12px;font-weight:bold;color:#fff;white-space:nowrap;letter-spacing:-0.3px">2011年7月</div>
<div class="cal" style="left:2.2px;top:447.5px;width:29.7px;font-size:9.6px;line-height:10px;color:#2a5ae0;white-space:nowrap;letter-spacing:-0.6px;text-indent:0px;-webkit-text-stroke:0.3px #2a5ae0">星期日</div>
<div class="cal" style="left:31.9px;top:447.5px;width:29.7px;font-size:9.6px;line-height:10px;color:#2a5ae0;white-space:nowrap;letter-spacing:-0.6px;text-indent:0px;-webkit-text-stroke:0.3px #2a5ae0">星期一</div>
<div class="cal" style="left:61.5px;top:447.5px;width:29.7px;font-size:9.6px;line-height:10px;color:#2a5ae0;white-space:nowrap;letter-spacing:-0.6px;text-indent:0px;-webkit-text-stroke:0.3px #2a5ae0">星期二</div>
<div class="cal" style="left:91.2px;top:447.5px;width:29.7px;font-size:9.6px;line-height:10px;color:#2a5ae0;white-space:nowrap;letter-spacing:-0.6px;text-indent:0px;-webkit-text-stroke:0.3px #2a5ae0">星期三</div>
<div class="cal" style="left:120.9px;top:447.5px;width:29.7px;font-size:9.6px;line-height:10px;color:#2a5ae0;white-space:nowrap;letter-spacing:-0.6px;text-indent:0px;-webkit-text-stroke:0.3px #2a5ae0">星期四</div>
<div class="cal" style="left:150.6px;top:447.5px;width:29.7px;font-size:9.6px;line-height:10px;color:#2a5ae0;white-space:nowrap;letter-spacing:-0.6px;text-indent:0px;-webkit-text-stroke:0.3px #2a5ae0">星期五</div>
<div class="cal" style="left:180.2px;top:447.5px;width:29.7px;font-size:9.6px;line-height:10px;color:#2a5ae0;white-space:nowrap;letter-spacing:-0.6px;text-indent:0px;-webkit-text-stroke:0.3px #2a5ae0">星期六</div>
<div class="a" style="left:3px;top:456px;width:208px;height:1px;background:#404040"></div>
<div class="a" style="left:62px;top:493px;width:29px;height:11px;background:#0a5ae6"></div>
<div class="cal" style="left:3.0px;top:459.0px;width:29.7px;font-size:10px;line-height:10px;color:#c8d4e8">26</div>
<div class="cal" style="left:32.7px;top:459.0px;width:29.7px;font-size:10px;line-height:10px;color:#c8d4e8">27</div>
<div class="cal" style="left:62.4px;top:459.0px;width:29.7px;font-size:10px;line-height:10px;color:#c8d4e8">28</div>
<div class="cal" style="left:92.1px;top:459.0px;width:29.7px;font-size:10px;line-height:10px;color:#c8d4e8">29</div>
<div class="cal" style="left:121.8px;top:459.0px;width:29.7px;font-size:10px;line-height:10px;color:#c8d4e8">30</div>
<div class="cal" style="left:151.5px;top:459.0px;width:29.7px;font-size:10px;line-height:10px;color:#111">1</div>
<div class="cal" style="left:181.2px;top:459.0px;width:29.7px;font-size:10px;line-height:10px;color:#111">2</div>
<div class="cal" style="left:3.0px;top:470.7px;width:29.7px;font-size:10px;line-height:10px;color:#111">3</div>
<div class="cal" style="left:32.7px;top:470.7px;width:29.7px;font-size:10px;line-height:10px;color:#111">4</div>
<div class="cal" style="left:62.4px;top:470.7px;width:29.7px;font-size:10px;line-height:10px;color:#111">5</div>
<div class="cal" style="left:92.1px;top:470.7px;width:29.7px;font-size:10px;line-height:10px;color:#111">6</div>
<div class="cal" style="left:121.8px;top:470.7px;width:29.7px;font-size:10px;line-height:10px;color:#111">7</div>
<div class="cal" style="left:151.5px;top:470.7px;width:29.7px;font-size:10px;line-height:10px;color:#111">8</div>
<div class="cal" style="left:181.2px;top:470.7px;width:29.7px;font-size:10px;line-height:10px;color:#111">9</div>
<div class="cal" style="left:3.0px;top:482.4px;width:29.7px;font-size:10px;line-height:10px;color:#111">10</div>
<div class="cal" style="left:32.7px;top:482.4px;width:29.7px;font-size:10px;line-height:10px;color:#111">11</div>
<div class="cal" style="left:62.4px;top:482.4px;width:29.7px;font-size:10px;line-height:10px;color:#111">12</div>
<div class="cal" style="left:92.1px;top:482.4px;width:29.7px;font-size:10px;line-height:10px;color:#111">13</div>
<div class="cal" style="left:121.8px;top:482.4px;width:29.7px;font-size:10px;line-height:10px;color:#111">14</div>
<div class="cal" style="left:151.5px;top:482.4px;width:29.7px;font-size:10px;line-height:10px;color:#111">15</div>
<div class="cal" style="left:181.2px;top:482.4px;width:29.7px;font-size:10px;line-height:10px;color:#111">16</div>
<div class="cal" style="left:3.0px;top:494.1px;width:29.7px;font-size:10px;line-height:10px;color:#111">17</div>
<div class="cal" style="left:32.7px;top:494.1px;width:29.7px;font-size:10px;line-height:10px;color:#111">18</div>
<div class="cal" style="left:62.4px;top:494.1px;width:29.7px;font-size:10px;line-height:10px;color:#fff">19</div>
<div class="cal" style="left:92.1px;top:494.1px;width:29.7px;font-size:10px;line-height:10px;color:#111">20</div>
<div class="cal" style="left:121.8px;top:494.1px;width:29.7px;font-size:10px;line-height:10px;color:#111">21</div>
<div class="cal" style="left:151.5px;top:494.1px;width:29.7px;font-size:10px;line-height:10px;color:#111">22</div>
<div class="cal" style="left:181.2px;top:494.1px;width:29.7px;font-size:10px;line-height:10px;color:#111">23</div>
<div class="cal" style="left:3.0px;top:505.8px;width:29.7px;font-size:10px;line-height:10px;color:#111">24</div>
<div class="cal" style="left:32.7px;top:505.8px;width:29.7px;font-size:10px;line-height:10px;color:#111">25</div>
<div class="cal" style="left:62.4px;top:505.8px;width:29.7px;font-size:10px;line-height:10px;color:#111">26</div>
<div class="cal" style="left:92.1px;top:505.8px;width:29.7px;font-size:10px;line-height:10px;color:#111">27</div>
<div class="cal" style="left:121.8px;top:505.8px;width:29.7px;font-size:10px;line-height:10px;color:#111">28</div>
<div class="cal" style="left:151.5px;top:505.8px;width:29.7px;font-size:10px;line-height:10px;color:#111">29</div>
<div class="cal" style="left:181.2px;top:505.8px;width:29.7px;font-size:10px;line-height:10px;color:#111">30</div>
<div class="cal" style="left:3.0px;top:517.5px;width:29.7px;font-size:10px;line-height:10px;color:#111">31</div>
<div class="cal" style="left:32.7px;top:517.5px;width:29.7px;font-size:10px;line-height:10px;color:#c8d4e8">1</div>
<div class="cal" style="left:62.4px;top:517.5px;width:29.7px;font-size:10px;line-height:10px;color:#c8d4e8">2</div>
<div class="cal" style="left:92.1px;top:517.5px;width:29.7px;font-size:10px;line-height:10px;color:#c8d4e8">3</div>
<div class="cal" style="left:121.8px;top:517.5px;width:29.7px;font-size:10px;line-height:10px;color:#c8d4e8">4</div>
<div class="cal" style="left:151.5px;top:517.5px;width:29.7px;font-size:10px;line-height:10px;color:#c8d4e8">5</div>
<div class="cal" style="left:181.2px;top:517.5px;width:29.7px;font-size:10px;line-height:10px;color:#c8d4e8">6</div>
<div class="a" style="left:5px;top:531px;width:27px;height:8px;border:1px solid #f04040"></div>
<div class="a" style="left:34.8px;top:530.5px;font-size:10.3px;line-height:11px;font-weight:bold;color:#111;white-space:nowrap;letter-spacing:-0.25px">今天: 2011-12-7</div>

<!-- bottom buttons -->
<div class="a" style="left:18px;top:549px;width:44px;height:19px;border:1px solid #4a6a98;border-radius:3px;background:linear-gradient(#fefefe,#f4f3ee 60%,#dcd8c8)"></div>
<div class="a" style="left:22.3px;top:555.3px;font-size:9.35px;line-height:10px;color:#333;white-space:nowrap">曲线预览</div>
<div class="a" style="left:83px;top:549px;width:44px;height:19px;border:1px solid #4a6a98;border-radius:3px;background:linear-gradient(#fefefe,#f4f3ee 60%,#dcd8c8)"></div>
<div class="a" style="left:86.8px;top:555.3px;font-size:9.35px;line-height:10px;color:#333;white-space:nowrap">曲线查看</div>
<div class="a" style="left:148px;top:549px;width:46px;height:19px;border:1px solid #4a6a98;border-radius:3px;background:linear-gradient(#fefefe,#f4f3ee 60%,#dcd8c8)"></div>
<div class="a" style="left:152.6px;top:555.3px;font-size:9.5px;line-height:10px;color:#000;white-space:nowrap;-webkit-text-stroke:0.1px #000">事件查看</div>
<div class="a" style="left:262px;top:553px;width:14px;height:13px;border:1.5px solid #5a78a8;border-radius:3px;background:linear-gradient(#fafaf8,#eeece4)"></div>
<svg class="a" style="left:264px;top:555px" width="13" height="13" viewBox="0 0 13 13">
 <rect x="1" y="4.5" width="1.5" height="6" fill="#10b0c8"/>
 <path d="M2.5,5 L5,3.5 L7,4.5 L11,5.5 L8,7 L8,9.5 L6.5,10.5 L2.5,10.5Z" fill="#e8e860" stroke="#303018" stroke-width=".8"/>
 <path d="M12,1 V12" stroke="#111" stroke-width="1.4" stroke-dasharray="1.2,1"/>
 <rect x="11.2" y="5.5" width="1.6" height="2" fill="#f03040"/>
</svg>

<!-- table -->
<div class="a" style="left:287px;top:423px;width:510px;height:153px;background:#ECE9D8;border:1px solid #a8b8d0;border-right-color:#c8c4b4;border-bottom-color:#c8c4b4;box-sizing:border-box"></div>
<div class="a" style="left:287px;top:423px;width:495px;height:18px;background:#d8e4f8"></div>
<div class="a" style="left:287px;top:441px;width:10px;height:131px;background:#d8e4f8"></div>
<div class="a" style="left:297px;top:441px;width:113px;height:131px;background:#d8e4f8"></div>
<div class="a" style="left:297px;top:423px;width:1px;height:149px;background:#a8b8d8"></div>
<div class="a" style="left:410px;top:423px;width:1px;height:149px;background:#a8b8d8"></div>
<div class="a" style="left:567px;top:423px;width:1px;height:149px;background:#a8b8d8"></div>
<div class="a" style="left:781px;top:423px;width:1px;height:149px;background:#a8b8d8"></div>
<div class="a" style="left:341px;top:426px;font-size:12px;line-height:12px;color:#222">时间</div>
<div class="a" style="left:477px;top:426px;font-size:12px;line-height:12px;color:#222">事件</div>
<div class="a" style="left:662px;top:426px;font-size:12px;line-height:12px;color:#222">原因</div>
<div class="a" style="left:287px;top:441px;width:495px;height:1px;background:#98acd8"></div>
<svg class="a" style="left:0;top:0" width="800" height="600"><text x="299.5" y="452.6" font-size="11" fill="#2424ec" stroke="#2424ec" stroke-width="0.2" textLength="83.5" lengthAdjust="spacingAndGlyphs" font-family="Liberation Sans">2011-7-19 16:01:07</text></svg>
<div class="a" style="left:412px;top:443px;font-size:11px;line-height:12px;color:#222">参数异常</div>
<div class="a" style="left:287px;top:457px;width:495px;height:1px;background:#98acd8"></div>
<svg class="a" style="left:0;top:0" width="800" height="600"><text x="299.5" y="468.6" font-size="11" fill="#2424ec" stroke="#2424ec" stroke-width="0.2" textLength="83.5" lengthAdjust="spacingAndGlyphs" font-family="Liberation Sans">2011-7-19 16:05:35</text></svg>
<div class="a" style="left:412px;top:459px;font-size:11px;line-height:12px;color:#222">参数稳定</div>
<div class="a" style="left:287px;top:474px;width:495px;height:1px;background:#98acd8"></div>
<svg class="a" style="left:0;top:0" width="800" height="600"><text x="299.5" y="485.1" font-size="11" fill="#2424ec" stroke="#2424ec" stroke-width="0.2" textLength="83.5" lengthAdjust="spacingAndGlyphs" font-family="Liberation Sans">2011-7-19 16:19:24</text></svg>
<div class="a" style="left:412px;top:476px;font-size:11px;line-height:12px;color:#222">输差超限</div>
<div class="a" style="left:287px;top:490px;width:495px;height:1px;background:#98acd8"></div>
<div class="a" style="left:298px;top:491px;width:112px;height:15px;background:#316ac5"></div>
<svg class="a" style="left:289px;top:494px" width="6" height="9"><path d="M1,0 L5,4.5 L1,9Z" fill="#000"/></svg>
<svg class="a" style="left:0;top:0" width="800" height="600"><text x="299.5" y="501.6" font-size="11" fill="#fff" stroke="#fff" stroke-width="0.2" textLength="83.5" lengthAdjust="spacingAndGlyphs" font-family="Liberation Sans">2011-7-19 16:48:04</text></svg>
<div class="a" style="left:412px;top:492px;font-size:11px;line-height:12px;color:#222">参数异常</div>
<div class="a" style="left:287px;top:506px;width:495px;height:1px;background:#98acd8"></div>
<svg class="a" style="left:0;top:0" width="800" height="600"><text x="299.5" y="517.6" font-size="11" fill="#2424ec" stroke="#2424ec" stroke-width="0.2" textLength="83.5" lengthAdjust="spacingAndGlyphs" font-family="Liberation Sans">2011-7-19 16:49:50</text></svg>
<div class="a" style="left:412px;top:508px;font-size:11px;line-height:12px;color:#222">参数稳定</div>
<div class="a" style="left:287px;top:522px;width:495px;height:1px;background:#98acd8"></div>
<svg class="a" style="left:0;top:0" width="800" height="600"><text x="299.5" y="534.1" font-size="11" fill="#2424ec" stroke="#2424ec" stroke-width="0.2" textLength="83.5" lengthAdjust="spacingAndGlyphs" font-family="Liberation Sans">2011-7-19 17:10:30</text></svg>
<div class="a" style="left:412px;top:524px;font-size:11px;line-height:12px;color:#222">输差恢复</div>
<div class="a" style="left:287px;top:539px;width:495px;height:1px;background:#98acd8"></div>
<svg class="a" style="left:0;top:0" width="800" height="600"><text x="299.5" y="550.6" font-size="11" fill="#2424ec" stroke="#2424ec" stroke-width="0.2" textLength="83.5" lengthAdjust="spacingAndGlyphs" font-family="Liberation Sans">2011-7-19 19:01:00</text></svg>
<div class="a" style="left:412px;top:541px;font-size:11px;line-height:12px;color:#222">输差超限</div>
<div class="a" style="left:287px;top:555px;width:495px;height:1px;background:#98acd8"></div>
<svg class="a" style="left:0;top:0" width="800" height="600"><text x="299.5" y="566.6" font-size="11" fill="#2424ec" stroke="#2424ec" stroke-width="0.2" textLength="83.5" lengthAdjust="spacingAndGlyphs" font-family="Liberation Sans">2011-7-19 19:03:50</text></svg>
<div class="a" style="left:412px;top:557px;font-size:11px;line-height:12px;color:#222">输差恢复</div>
<div class="a" style="left:287px;top:571px;width:495px;height:1px;background:#98acd8"></div>
<div class="a" style="left:782px;top:424px;width:15px;height:151px;background:#fcfcfa"></div>
<div class="a" style="left:784px;top:425px;width:11px;height:12px;background:linear-gradient(90deg,#d0ddf8,#b8ccf4);border-radius:1px"></div>
<svg class="a" style="left:785px;top:427px" width="9" height="8"><path d="M1,6 L4.5,2 L8,6" stroke="#303850" stroke-width="1.6" fill="none"/></svg>
<div class="a" style="left:784px;top:498px;width:11px;height:41px;background:linear-gradient(90deg,#d0ddf8,#b8ccf4);border-radius:1px"></div>
<div class="a" style="left:784px;top:562px;width:11px;height:11px;background:linear-gradient(90deg,#d0ddf8,#b8ccf4);border-radius:1px"></div>
<svg class="a" style="left:785px;top:564px" width="9" height="8"><path d="M1,2 L4.5,6 L8,2" stroke="#303850" stroke-width="1.6" fill="none"/></svg>

<div class="a" style="left:799px;top:22px;width:1px;height:556px;background:#d8d4c4"></div>
<!-- status bar -->
<div class="a" style="left:0;top:577px;width:800px;height:2px;background:#f4f0e0"></div>
<div class="a" style="left:0;top:579px;width:800px;height:21px;background:#0a428e"></div>
<div class="a" style="left:76px;top:580px;width:1px;height:19px;background:#b8b4a0"></div>
<div class="a" style="left:151px;top:580px;width:1px;height:19px;background:#b8b4a0"></div>
<div class="a" style="left:226px;top:580px;width:1px;height:19px;background:#b8b4a0"></div>
<div class="a" style="left:301px;top:580px;width:1px;height:19px;background:#b8b4a0"></div>
<div class="a" style="left:420px;top:580px;width:1px;height:19px;background:#b8b4a0"></div>
<div class="a" style="left:660px;top:580px;width:1px;height:19px;background:#b8b4a0"></div>
<svg class="a" style="left:0;top:582px" width="12" height="12"><circle cx="5.5" cy="5.5" r="4.5" fill="#0a1e10" stroke="#8a8a70" stroke-width="1"/><circle cx="4" cy="4" r="1.2" fill="#ccc"/></svg>
<div class="a" style="left:11px;top:583px;font-size:11px;line-height:12px;color:#fff">龙一联</div>
<svg class="a" style="left:77px;top:582px" width="12" height="12"><circle cx="5.5" cy="5.5" r="4.5" fill="#0a1e10" stroke="#8a8a70" stroke-width="1"/><circle cx="4" cy="4" r="1.2" fill="#ccc"/></svg>
<div class="a" style="left:88.5px;top:583px;font-size:11px;line-height:12px;color:#fff">杏西联</div>
<svg class="a" style="left:422px;top:582px" width="15" height="15"><path d="M1.5,5.5 H4 L8.5,1.5 V12.5 L4,9 H1.5Z" fill="#b8d0f8"/><path d="M10,4 Q12,7 10,10 M11.5,2.5 Q14.5,7 11.5,11.5" stroke="#0a1a40" stroke-width="1.2" fill="none"/><path d="M1,2 L12,13 M12,2 L1,13" stroke="#e02030" stroke-width="1.1"/></svg>
</body></html>
